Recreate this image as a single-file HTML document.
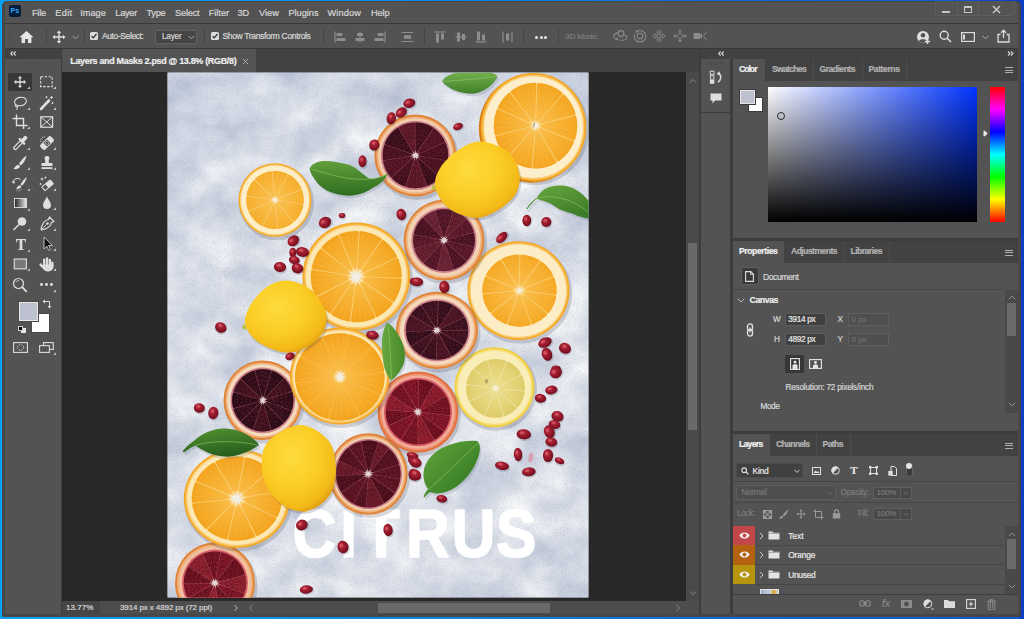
<!DOCTYPE html>
<html><head><meta charset="utf-8"><title>Layers and Masks 2.psd</title>
<style>
html,body{margin:0;padding:0;}
body{width:1024px;height:619px;overflow:hidden;position:relative;background:#0f3fc4;font-family:"Liberation Sans",sans-serif;}
#app div,#app span,#app svg{position:absolute;display:block;box-sizing:border-box;}
#app span{white-space:nowrap;-webkit-text-stroke:0.22px;}
#app{position:absolute;left:0;top:0;width:1024px;height:619px;overflow:hidden;}
</style></head><body><div id="app">
<div style="left:0;top:0;width:1024px;height:619px;background:linear-gradient(to right,#0aa2f7 0%,#0c8ae6 40%,#0f62d2 80%,#1259cc 100%);"></div>
<div style="left:1019px;top:0;width:5px;height:619px;background:#0b3ec2;"></div>
<div style="left:940px;top:0;width:84px;height:3px;background:linear-gradient(to right,rgba(11,62,194,0),#0b3ec2);"></div>
<div style="left:2px;top:1px;width:1019px;height:616px;background:#474747;border-radius:5px 5px 2px 2px;"></div>
<div style="left:5px;top:2px;width:1013px;height:21px;background:#535353;border-radius:3px 3px 0 0;"></div>
<div style="left:8.7px;top:5.2px;width:12.3px;height:11.7px;background:#021e38;border-radius:2.2px;"></div>
<span style="left:10.6px;top:4.20px;line-height:14px;font-size:7px;color:#31a8ff;font-weight:bold;letter-spacing:0.019px;-webkit-text-stroke:0;">Ps</span>
<span style="left:32px;top:6.00px;line-height:14px;font-size:9.2px;color:#d6d6d6;letter-spacing:-0.256px;">File</span>
<span style="left:55.3px;top:6.00px;line-height:14px;font-size:9.2px;color:#d6d6d6;letter-spacing:0.337px;">Edit</span>
<span style="left:80.3px;top:6.00px;line-height:14px;font-size:9.2px;color:#d6d6d6;letter-spacing:-0.013px;">Image</span>
<span style="left:115.3px;top:6.00px;line-height:14px;font-size:9.2px;color:#d6d6d6;letter-spacing:-0.262px;">Layer</span>
<span style="left:146.5px;top:6.00px;line-height:14px;font-size:9.2px;color:#d6d6d6;letter-spacing:-0.236px;">Type</span>
<span style="left:175px;top:6.00px;line-height:14px;font-size:9.2px;color:#d6d6d6;letter-spacing:-0.178px;">Select</span>
<span style="left:208.8px;top:6.00px;line-height:14px;font-size:9.2px;color:#d6d6d6;letter-spacing:-0.040px;">Filter</span>
<span style="left:237.5px;top:6.00px;line-height:14px;font-size:9.2px;color:#d6d6d6;letter-spacing:-0.130px;">3D</span>
<span style="left:259px;top:6.00px;line-height:14px;font-size:9.2px;color:#d6d6d6;letter-spacing:0.056px;">View</span>
<span style="left:288.5px;top:6.00px;line-height:14px;font-size:9.2px;color:#d6d6d6;letter-spacing:-0.025px;">Plugins</span>
<span style="left:327.5px;top:6.00px;line-height:14px;font-size:9.2px;color:#d6d6d6;letter-spacing:0.130px;">Window</span>
<span style="left:371px;top:6.00px;line-height:14px;font-size:9.2px;color:#d6d6d6;letter-spacing:-0.105px;">Help</span>
<div style="left:935.2px;top:1px;width:79.5px;height:15px;border:1px solid #5e5e5e;border-top:none;border-radius:0 0 4px 4px;background:#545454;"></div>
<div style="left:957px;top:2px;width:1px;height:13px;background:#5e5e5e;"></div>
<div style="left:978px;top:2px;width:1px;height:13px;background:#5e5e5e;"></div>
<div style="left:942px;top:11px;width:8px;height:2px;background:#c8c8c8;"></div>
<div style="left:964px;top:6px;width:8px;height:7px;border:1px solid #c8c8c8;border-top-width:2px;"></div>
<svg style="left:992px;top:5px;" width="9" height="9" viewBox="0 0 9 9"><path d="M1 1L8 8M8 1L1 8" stroke="#c8c8c8" stroke-width="1.5" fill="none"/></svg>
<div style="left:5px;top:23px;width:1013px;height:26px;background:#535353;border-top:1px solid #383838;border-bottom:1px solid #383838;"></div>
<div style="left:8.5px;top:29.0px;width:1px;height:1.2px;background:#444;"></div>
<div style="left:8.5px;top:31.5px;width:1px;height:1.2px;background:#444;"></div>
<div style="left:8.5px;top:34.0px;width:1px;height:1.2px;background:#444;"></div>
<div style="left:8.5px;top:36.5px;width:1px;height:1.2px;background:#444;"></div>
<div style="left:8.5px;top:39.0px;width:1px;height:1.2px;background:#444;"></div>
<div style="left:8.5px;top:41.5px;width:1px;height:1.2px;background:#444;"></div>
<svg style="left:19px;top:30px;" width="15" height="14" viewBox="0 0 15 14"><path d="M7.5 1L0.5 7.2H2.6V13H6V9H9V13H12.4V7.2H14.5Z" fill="#e6e6e6"/></svg>
<div style="left:46px;top:27px;width:1px;height:18px;background:#464646;"></div>
<svg style="left:52px;top:30px;" width="14" height="14" viewBox="0 0 14 14"><path d="M7 0.5L9.3 3H7.7V6.3H11V4.7L13.5 7L11 9.3V7.7H7.7V11H9.3L7 13.5L4.7 11H6.3V7.7H3V9.3L0.5 7L3 4.7V6.3H6.3V3H4.7Z" fill="#e0e0e0"/></svg>
<svg style="left:72px;top:35px;" width="7" height="5" viewBox="0 0 7 5"><path d="M0.5 0.8L3.5 3.8L6.5 0.8" stroke="#a8a8a8" stroke-width="1" fill="none"/></svg>
<div style="left:84px;top:27px;width:1px;height:18px;background:#464646;"></div>
<div style="left:90px;top:32px;width:8px;height:8px;background:#dcdcdc;border-radius:1.5px;"></div>
<svg style="left:90px;top:32px;" width="8" height="8" viewBox="0 0 8 8"><path d="M1.6 4.2L3.3 5.9L6.5 2" stroke="#333" stroke-width="1.3" fill="none"/></svg>
<span style="left:102px;top:29.30px;line-height:14px;font-size:8.5px;color:#d6d6d6;letter-spacing:-0.400px;">Auto-Select:</span>
<div style="left:155px;top:30px;width:42px;height:14px;background:#454545;border:1px solid #606060;border-radius:2px;"></div>
<span style="left:162px;top:30.00px;line-height:14px;font-size:8.2px;color:#d6d6d6;letter-spacing:-0.202px;">Layer</span>
<svg style="left:188px;top:35px;" width="7" height="5" viewBox="0 0 7 5"><path d="M0.5 0.8L3.5 3.8L6.5 0.8" stroke="#b0b0b0" stroke-width="1" fill="none"/></svg>
<div style="left:204px;top:27px;width:1px;height:18px;background:#464646;"></div>
<div style="left:211px;top:32px;width:8px;height:8px;background:#dcdcdc;border-radius:1.5px;"></div>
<svg style="left:211px;top:32px;" width="8" height="8" viewBox="0 0 8 8"><path d="M1.6 4.2L3.3 5.9L6.5 2" stroke="#333" stroke-width="1.3" fill="none"/></svg>
<span style="left:222.5px;top:29.30px;line-height:14px;font-size:8.5px;color:#d6d6d6;letter-spacing:-0.343px;">Show Transform Controls</span>
<div style="left:323px;top:27px;width:1px;height:18px;background:#464646;"></div>
<svg style="left:334px;top:31px;" width="12" height="12" viewBox="0 0 12 12"><path d="M1 0.5V11.5" stroke="#8d8d8d" stroke-width="1.2"/><rect x="2.5" y="2" width="6" height="3" fill="#8d8d8d"/><rect x="2.5" y="7" width="9" height="3" fill="#8d8d8d"/></svg>
<svg style="left:354px;top:31px;" width="12" height="12" viewBox="0 0 12 12"><path d="M6 0.5V11.5" stroke="#8d8d8d" stroke-width="1.2"/><rect x="3" y="2" width="6" height="3" fill="#8d8d8d"/><rect x="1.5" y="7" width="9" height="3" fill="#8d8d8d"/></svg>
<svg style="left:374px;top:31px;" width="12" height="12" viewBox="0 0 12 12"><path d="M11 0.5V11.5" stroke="#8d8d8d" stroke-width="1.2"/><rect x="3.5" y="2" width="6" height="3" fill="#8d8d8d"/><rect x="0.5" y="7" width="9" height="3" fill="#8d8d8d"/></svg>
<svg style="left:401px;top:31px;" width="13" height="12" viewBox="0 0 13 12"><path d="M0.5 1.5H12.5M0.5 10.5H12.5" stroke="#8d8d8d" stroke-width="1.2"/><rect x="3" y="4.2" width="7" height="3.6" fill="#8d8d8d"/></svg>
<div style="left:424px;top:27px;width:1px;height:18px;background:#464646;"></div>
<svg style="left:434px;top:31px;" width="12" height="12" viewBox="0 0 12 12"><path d="M0.5 1H11.5" stroke="#8d8d8d" stroke-width="1.2"/><rect x="2" y="2.5" width="3" height="9" fill="#8d8d8d"/><rect x="7" y="2.5" width="3" height="6" fill="#8d8d8d"/></svg>
<svg style="left:455px;top:31px;" width="12" height="12" viewBox="0 0 12 12"><path d="M0.5 6H11.5" stroke="#8d8d8d" stroke-width="1.2"/><rect x="2" y="1.5" width="3" height="9" fill="#8d8d8d"/><rect x="7" y="3" width="3" height="6" fill="#8d8d8d"/></svg>
<svg style="left:475px;top:31px;" width="12" height="12" viewBox="0 0 12 12"><path d="M0.5 11H11.5" stroke="#8d8d8d" stroke-width="1.2"/><rect x="2" y="0.5" width="3" height="9" fill="#8d8d8d"/><rect x="7" y="3.5" width="3" height="6" fill="#8d8d8d"/></svg>
<svg style="left:502px;top:31px;" width="12" height="12" viewBox="0 0 12 12"><path d="M1 0.5V11.5M10 0.5V11.5" stroke="#8d8d8d" stroke-width="1.2"/><rect x="4" y="2.5" width="3.2" height="7" fill="#8d8d8d"/></svg>
<div style="left:523px;top:27px;width:1px;height:18px;background:#464646;"></div>
<div style="left:535.2px;top:35.6px;width:3px;height:3px;border-radius:50%;background:#e6e6e6;"></div>
<div style="left:539.7px;top:35.6px;width:3px;height:3px;border-radius:50%;background:#e6e6e6;"></div>
<div style="left:544.2px;top:35.6px;width:3px;height:3px;border-radius:50%;background:#e6e6e6;"></div>
<div style="left:558px;top:27px;width:1px;height:18px;background:#464646;"></div>
<span style="left:565.5px;top:29.50px;line-height:14px;font-size:8px;color:#7c7c7c;letter-spacing:-0.210px;">3D Mode:</span>
<svg style="left:611.5px;top:28.6px;" width="16" height="14" viewBox="0 0 16 14"><circle cx="9" cy="4.5" r="2.9" fill="none" stroke="#8a8a8a" stroke-width="1.1"/><path d="M5.8 3.6C1.5 4.6 0.6 7.4 3 9.4M8.5 11.2C11.5 11.6 14.5 10.6 14.8 8.6C15 7.4 13.8 6.4 12.4 5.8" fill="none" stroke="#8a8a8a" stroke-width="1.1"/><path d="M2.6 10.6L6.8 11.6L5 8.2Z" fill="#8a8a8a"/></svg>
<svg style="left:632.5px;top:28.6px;" width="14" height="14" viewBox="0 0 14 14"><path d="M4.2 2.2A5.8 5.8 0 1 1 1.6 5.2" fill="none" stroke="#8a8a8a" stroke-width="1.1"/><path d="M2.6 0.8L5.6 2.6L2.8 4.4Z" fill="#8a8a8a"/><circle cx="7" cy="7" r="2.8" fill="none" stroke="#8a8a8a" stroke-width="1.1"/></svg>
<svg style="left:652px;top:28.6px;" width="14" height="14" viewBox="0 0 14 14"><path d="M7 0.8L9.3 3.2H7.9V6.1H10.8V4.7L13.2 7L10.8 9.3V7.9H7.9V10.8H9.3L7 13.2L4.7 10.8H6.1V7.9H3.2V9.3L0.8 7L3.2 4.7V6.1H6.1V3.2H4.7Z" fill="none" stroke="#8a8a8a" stroke-width="0.9"/></svg>
<svg style="left:672px;top:28.6px;" width="16" height="14" viewBox="0 0 16 14"><path d="M8 0.5L9.6 2.8H6.4Z M8 13.5L10 10.8H6Z M1 7L3.6 5.2V8.8Z M15 7L12.4 5.2V8.8Z" fill="#8a8a8a"/><path d="M8 3.8L11.2 7L8 10.2L4.8 7Z" fill="none" stroke="#8a8a8a" stroke-width="1"/><path d="M3.6 7H4.8M11.2 7H12.4M8 2.8V3.8M8 10.2V10.8" stroke="#8a8a8a" stroke-width="1"/></svg>
<svg style="left:692.5px;top:30.6px;" width="16" height="11" viewBox="0 0 16 11"><rect x="0.5" y="2" width="6.6" height="6" fill="#8a8a8a"/><path d="M7.1 3.6L9 2.6V7.4L7.1 6.4Z" fill="#8a8a8a"/><path d="M13.6 0.8L10.4 5L13.6 9.2" fill="none" stroke="#8a8a8a" stroke-width="0.9"/></svg>
<svg style="left:916px;top:30px;" width="15" height="15" viewBox="0 0 15 15"><circle cx="7" cy="7" r="6" fill="#e0e0e0"/><circle cx="7" cy="5.2" r="2.3" fill="#535353"/><path d="M2.8 11.2C3.5 8.6 10.5 8.6 11.2 11.2C9 13.4 5 13.4 2.8 11.2Z" fill="#535353"/><path d="M11.5 9V14M9 11.5H14" stroke="#e0e0e0" stroke-width="1.4"/></svg>
<svg style="left:939px;top:30px;" width="13" height="13" viewBox="0 0 13 13"><circle cx="5.2" cy="5.2" r="4" fill="none" stroke="#dcdcdc" stroke-width="1.4"/><path d="M8.2 8.2L12 12" stroke="#dcdcdc" stroke-width="1.6"/></svg>
<svg style="left:961px;top:32px;" width="14" height="10" viewBox="0 0 14 10"><rect x="0.6" y="0.6" width="12.8" height="8.8" fill="none" stroke="#dcdcdc" stroke-width="1.2"/><rect x="2" y="2.5" width="2" height="5" fill="#dcdcdc"/></svg>
<svg style="left:982px;top:35px;" width="7" height="5" viewBox="0 0 7 5"><path d="M0.5 0.8L3.5 3.8L6.5 0.8" stroke="#b0b0b0" stroke-width="1" fill="none"/></svg>
<svg style="left:997px;top:29px;" width="13" height="14" viewBox="0 0 13 14"><path d="M3.5 5.5H1V13H12V5.5H9.5" fill="none" stroke="#dcdcdc" stroke-width="1.3"/><path d="M6.5 9V1.5M4 3.8L6.5 1.2L9 3.8" fill="none" stroke="#dcdcdc" stroke-width="1.3"/></svg>
<div style="left:5px;top:49px;width:55.5px;height:565px;background:#535353;"></div>
<div style="left:5px;top:49px;width:55.5px;height:9.5px;background:#424242;"></div>
<svg style="left:9.5px;top:51.3px;" width="7" height="5" viewBox="0 0 7 5"><path d="M2.6 0.5L0.7 2.5L2.6 4.5M5.6 0.5L3.7 2.5L5.6 4.5" stroke="#d8d8d8" stroke-width="1.1" fill="none"/></svg>
<div style="left:25.0px;top:61.5px;width:1px;height:3px;background:#484848;"></div>
<div style="left:27.6px;top:61.5px;width:1px;height:3px;background:#484848;"></div>
<div style="left:30.2px;top:61.5px;width:1px;height:3px;background:#484848;"></div>
<div style="left:32.8px;top:61.5px;width:1px;height:3px;background:#484848;"></div>
<div style="left:35.4px;top:61.5px;width:1px;height:3px;background:#484848;"></div>
<div style="left:38.0px;top:61.5px;width:1px;height:3px;background:#484848;"></div>
<div style="left:8px;top:73px;width:24px;height:18px;background:#383838;border-radius:1px;"></div>
<svg style="left:11.0px;top:72.5px;" width="18" height="18" viewBox="0 0 18 18"><g transform="translate(2.5,2.5) scale(0.93)"><path d="M7 0.5L9.3 3H7.7V6.3H11V4.7L13.5 7L11 9.3V7.7H7.7V11H9.3L7 13.5L4.7 11H6.3V7.7H3V9.3L0.5 7L3 4.7V6.3H6.3V3H4.7Z" fill="#dedede"/></g></svg>
<svg style="left:26.8px;top:85.5px" width="3.2" height="3.2" viewBox="0 0 3 3"><path d="M3 0V3H0Z" fill="#c4c4c4"/></svg>
<svg style="left:37.5px;top:72.5px;" width="18" height="18" viewBox="0 0 18 18"><rect x="2.6" y="3.8" width="11.6" height="9.8" fill="none" stroke="#dedede" stroke-width="1.1" stroke-dasharray="2.5 1.5"/></svg>
<svg style="left:53.3px;top:85.5px" width="3.2" height="3.2" viewBox="0 0 3 3"><path d="M3 0V3H0Z" fill="#c4c4c4"/></svg>
<svg style="left:11.0px;top:93.5px;" width="18" height="18" viewBox="0 0 18 18"><ellipse cx="9.5" cy="7.5" rx="6" ry="4.2" transform="rotate(-12 9.5 7.5)" fill="none" stroke="#dedede" stroke-width="1.1"/><path d="M4.6 10.2C3.6 11.2 4.6 12.8 6.2 12.4C6.6 13.5 6.2 14.8 5.6 15.8" fill="none" stroke="#dedede" stroke-width="1.1"/></svg>
<svg style="left:26.8px;top:106.5px" width="3.2" height="3.2" viewBox="0 0 3 3"><path d="M3 0V3H0Z" fill="#c4c4c4"/></svg>
<svg style="left:37.5px;top:93.5px;" width="18" height="18" viewBox="0 0 18 18"><path d="M3 15L11 6.5" stroke="#dedede" stroke-width="2.6" stroke-linecap="round"/><path d="M13.5 2V5M12 3.5H15M8.5 2.2V4.2M7.5 3.2H9.5M14.5 8V10M13.5 9H15.5" stroke="#dedede" stroke-width="0.9"/></svg>
<svg style="left:53.3px;top:106.5px" width="3.2" height="3.2" viewBox="0 0 3 3"><path d="M3 0V3H0Z" fill="#c4c4c4"/></svg>
<svg style="left:11.0px;top:113.0px;" width="18" height="18" viewBox="0 0 18 18"><path d="M5.5 1.5V12.5H16.5M1.5 5.5H12.5V16" fill="none" stroke="#dedede" stroke-width="1.4"/></svg>
<svg style="left:26.8px;top:126.0px" width="3.2" height="3.2" viewBox="0 0 3 3"><path d="M3 0V3H0Z" fill="#c4c4c4"/></svg>
<svg style="left:37.5px;top:113.0px;" width="18" height="18" viewBox="0 0 18 18"><rect x="2.8" y="3.8" width="11.8" height="10.4" fill="none" stroke="#dedede" stroke-width="1.2"/><path d="M2.8 3.8L14.6 14.2M14.6 3.8L2.8 14.2" stroke="#dedede" stroke-width="1"/></svg>
<svg style="left:11.0px;top:133.7px;" width="18" height="18" viewBox="0 0 18 18"><path d="M4.2 14L10.4 7.8" stroke="#dedede" stroke-width="4.2" stroke-linecap="round"/><path d="M4.4 13.8L10.6 7.6" stroke="#535353" stroke-width="1.8" stroke-linecap="round"/><path d="M8.6 5L13.2 9.6" stroke="#dedede" stroke-width="2.2" stroke-linecap="round"/><path d="M11.4 6.8L14.4 3.8" stroke="#dedede" stroke-width="3.8" stroke-linecap="round"/></svg>
<svg style="left:26.8px;top:146.7px" width="3.2" height="3.2" viewBox="0 0 3 3"><path d="M3 0V3H0Z" fill="#c4c4c4"/></svg>
<svg style="left:37.5px;top:133.7px;" width="18" height="18" viewBox="0 0 18 18"><g transform="rotate(-45 9 9)"><rect x="1.5" y="5.5" width="15" height="7" rx="2" fill="#dedede"/><rect x="6.5" y="6.5" width="5" height="5" fill="#535353"/><path d="M7.5 8H8.5M9.5 8H10.5M7.5 10H8.5M9.5 10H10.5" stroke="#dedede" stroke-width="1"/></g><path d="M3 8C2 5 4 2.5 7 3" fill="none" stroke="#dedede" stroke-width="0.9" stroke-dasharray="1.2 1.2"/></svg>
<svg style="left:53.3px;top:146.7px" width="3.2" height="3.2" viewBox="0 0 3 3"><path d="M3 0V3H0Z" fill="#c4c4c4"/></svg>
<svg style="left:11.0px;top:154.0px;" width="18" height="18" viewBox="0 0 18 18"><path d="M15.5 1.5C13 3 9.5 7 8 10L9.8 11.5C12.5 9.5 15 5 15.5 1.5Z" fill="#dedede"/><path d="M7.2 10.8C5 10.8 4.5 13 2.5 15C5.5 15.5 9 14.5 9 12.3Z" fill="#dedede"/></svg>
<svg style="left:26.8px;top:167.0px" width="3.2" height="3.2" viewBox="0 0 3 3"><path d="M3 0V3H0Z" fill="#c4c4c4"/></svg>
<svg style="left:37.5px;top:154.0px;" width="18" height="18" viewBox="0 0 18 18"><path d="M9 2C11 2 12 3.5 11.2 5.2C10.6 6.5 10.6 8 11 9H14.5V12H3.5V9H7C7.4 8 7.4 6.5 6.8 5.2C6 3.5 7 2 9 2Z" fill="#dedede"/><rect x="3.5" y="13.2" width="11" height="1.8" fill="#dedede"/></svg>
<svg style="left:53.3px;top:167.0px" width="3.2" height="3.2" viewBox="0 0 3 3"><path d="M3 0V3H0Z" fill="#c4c4c4"/></svg>
<svg style="left:11.0px;top:174.5px;" width="18" height="18" viewBox="0 0 18 18"><path d="M15.8 2C13.5 3.5 10.8 6.8 9.5 9.5L11 10.8C13.2 9 15.3 5 15.8 2Z" fill="#dedede"/><path d="M8.8 10.2C7 10.2 6.5 12.2 5 13.8C7.5 14.3 10.3 13.4 10.3 11.6Z" fill="#dedede"/><path d="M2 7.5A4.5 4.5 0 0 1 9.5 4.5" fill="none" stroke="#dedede" stroke-width="1"/><path d="M1 6L2.2 8.8L4.6 7Z" fill="#dedede"/><path d="M11 14A4.5 4.5 0 0 1 5 15" fill="none" stroke="#dedede" stroke-width="0.8" stroke-dasharray="1.2 1.2"/></svg>
<svg style="left:26.8px;top:187.5px" width="3.2" height="3.2" viewBox="0 0 3 3"><path d="M3 0V3H0Z" fill="#c4c4c4"/></svg>
<svg style="left:37.5px;top:174.5px;" width="18" height="18" viewBox="0 0 18 18"><g transform="rotate(-40 10 10)"><rect x="3.5" y="7" width="12" height="6" rx="1" fill="#dedede"/><rect x="4.5" y="8" width="4" height="4" fill="#535353"/></g><path d="M4 2.5V5.5M2.5 4H5.5M7.5 1.5V3.5M6.5 2.5H8.5M2.5 8V10M1.5 9H3.5" stroke="#dedede" stroke-width="0.9"/></svg>
<svg style="left:53.3px;top:187.5px" width="3.2" height="3.2" viewBox="0 0 3 3"><path d="M3 0V3H0Z" fill="#c4c4c4"/></svg>
<svg style="left:13.7px;top:198px" width="13" height="10" viewBox="0 0 14 11" preserveAspectRatio="none"><defs><linearGradient id="tg" x1="0" x2="1" y1="0" y2="0"><stop offset="0" stop-color="#222"/><stop offset="1" stop-color="#e8e8e8"/></linearGradient></defs><rect x="0.5" y="0.5" width="13" height="10" fill="url(#tg)" stroke="#dedede" stroke-width="1"/></svg>
<svg style="left:26.8px;top:207.8px" width="3.2" height="3.2" viewBox="0 0 3 3"><path d="M3 0V3H0Z" fill="#bdbdbd"/></svg>
<svg style="left:37.5px;top:194.0px;" width="18" height="18" viewBox="0 0 18 18"><path d="M9 2.5C10.5 6 13 8 13 11A4 4 0 0 1 5 11C5 8 7.5 6 9 2.5Z" fill="#dedede"/></svg>
<svg style="left:53.3px;top:207.0px" width="3.2" height="3.2" viewBox="0 0 3 3"><path d="M3 0V3H0Z" fill="#c4c4c4"/></svg>
<svg style="left:11.0px;top:215.0px;" width="18" height="18" viewBox="0 0 18 18"><circle cx="11" cy="6.5" r="4.3" fill="#dedede"/><path d="M8 9.5L2.5 15" stroke="#dedede" stroke-width="1.6"/></svg>
<svg style="left:26.8px;top:228.0px" width="3.2" height="3.2" viewBox="0 0 3 3"><path d="M3 0V3H0Z" fill="#c4c4c4"/></svg>
<svg style="left:37.5px;top:215.0px;" width="18" height="18" viewBox="0 0 18 18"><path d="M11.5 2L16 6.5L13.5 7.5C13 11 10.5 13.5 4 15L3 14C4.5 7.5 7 5 10.5 4.5Z" fill="none" stroke="#dedede" stroke-width="1.2"/><circle cx="9.5" cy="8.5" r="1.3" fill="#dedede"/><path d="M3.5 14.5L8.5 9.5" stroke="#dedede" stroke-width="0.9"/></svg>
<svg style="left:53.3px;top:228.0px" width="3.2" height="3.2" viewBox="0 0 3 3"><path d="M3 0V3H0Z" fill="#c4c4c4"/></svg>
<span style="left:15.8px;top:234.2px;line-height:22px;font-size:17px;color:#dedede;font-family:'Liberation Serif',serif;font-weight:bold;transform:scaleX(0.88);transform-origin:0 0;">T</span>
<svg style="left:26.8px;top:249.1px" width="3.2" height="3.2" viewBox="0 0 3 3"><path d="M3 0V3H0Z" fill="#bdbdbd"/></svg>
<svg style="left:37.5px;top:235.3px;" width="18" height="18" viewBox="0 0 18 18"><path d="M6 2L6 14L8.8 11.2L10.8 15.5L12.6 14.6L10.6 10.5H14.3Z" fill="#111" stroke="#c8c8c8" stroke-width="0.9"/></svg>
<svg style="left:53.3px;top:248.3px" width="3.2" height="3.2" viewBox="0 0 3 3"><path d="M3 0V3H0Z" fill="#c4c4c4"/></svg>
<svg style="left:11.0px;top:255.0px;" width="18" height="18" viewBox="0 0 18 18"><rect x="3.2" y="4" width="12.2" height="9.8" fill="#787878" stroke="#dedede" stroke-width="1.1"/></svg>
<svg style="left:26.8px;top:268.0px" width="3.2" height="3.2" viewBox="0 0 3 3"><path d="M3 0V3H0Z" fill="#c4c4c4"/></svg>
<svg style="left:37.5px;top:255.0px;" width="18" height="18" viewBox="0 0 18 18"><path d="M6.2 10.5V4.6M9.1 10V3.3M11.9 10.5V4.8M14.3 11.5V7.6" stroke="#dedede" stroke-width="2.3" stroke-linecap="round" fill="none"/><path d="M2.6 9.6L6 13.2" stroke="#dedede" stroke-width="2.4" stroke-linecap="round"/><path d="M5.1 9.5H15.4V11.6C15.4 14.4 13.2 16.4 10.4 16.4H9.6C7.6 16.4 6.2 15.6 5.1 13.4Z" fill="#dedede"/></svg>
<svg style="left:53.3px;top:268.0px" width="3.2" height="3.2" viewBox="0 0 3 3"><path d="M3 0V3H0Z" fill="#c4c4c4"/></svg>
<svg style="left:11.0px;top:275.6px;" width="18" height="18" viewBox="0 0 18 18"><circle cx="7.5" cy="7.5" r="5" fill="none" stroke="#dedede" stroke-width="1.2"/><path d="M11.2 11.2L15.8 15.8" stroke="#dedede" stroke-width="1.8"/><path d="M5 6.5A3 3 0 0 1 8 4.4" stroke="#dedede" stroke-width="0.7" fill="none"/></svg>
<div style="left:40.0px;top:283.4px;width:2.8px;height:2.8px;border-radius:50%;background:#dedede;"></div>
<div style="left:45.2px;top:283.4px;width:2.8px;height:2.8px;border-radius:50%;background:#dedede;"></div>
<div style="left:50.4px;top:283.4px;width:2.8px;height:2.8px;border-radius:50%;background:#dedede;"></div>
<svg style="left:53.3px;top:289.4px" width="3.2" height="3.2" viewBox="0 0 3 3"><path d="M3 0V3H0Z" fill="#bdbdbd"/></svg>
<div style="left:30.5px;top:313px;width:19px;height:19.5px;background:#fff;border:1px solid #4a4a4a;"></div>
<div style="left:18.5px;top:301.5px;width:19.5px;height:19px;background:#bdc1cf;border:1px solid #e8e8e8;box-shadow:0 0 0 1px #4a4a4a;"></div>
<svg style="left:42px;top:299px;" width="10" height="10" viewBox="0 0 10 10"><path d="M2.5 2.5H7.5V7.5" fill="none" stroke="#dedede" stroke-width="1"/><path d="M0.5 2.5L3 0.5V4.5Z M7.5 9.5L5.5 7H9.5Z" fill="#dedede"/></svg>
<div style="left:20.5px;top:328px;width:5px;height:5px;background:#e8e8e8;"></div>
<div style="left:18px;top:325.5px;width:5px;height:5px;background:#111;border:0.5px solid #ccc;"></div>
<svg style="left:13px;top:342px;" width="15" height="11" viewBox="0 0 15 11"><rect x="0.6" y="0.6" width="13.8" height="9.8" fill="none" stroke="#dedede" stroke-width="1.1"/><ellipse cx="7.5" cy="5.5" rx="3.2" ry="2.8" fill="none" stroke="#dedede" stroke-width="0.9" stroke-dasharray="1.3 1.1"/></svg>
<svg style="left:38.5px;top:342px;" width="15" height="11" viewBox="0 0 15 11"><rect x="4.5" y="0.6" width="9.8" height="6.8" fill="none" stroke="#dedede" stroke-width="1.1"/><rect x="0.6" y="3.6" width="9.8" height="6.8" fill="#535353" stroke="#dedede" stroke-width="1.1"/></svg>
<svg style="left:53.3px;top:351.8px" width="3.2" height="3.2" viewBox="0 0 3 3"><path d="M3 0V3H0Z" fill="#bdbdbd"/></svg>
<div style="left:60.5px;top:49px;width:2px;height:565px;background:#3d3d3d;"></div>
<div style="left:62px;top:49px;width:637px;height:23px;background:#424242;"></div>
<div style="left:62px;top:49px;width:194px;height:23px;background:#535353;"></div>
<span style="left:70.3px;top:53.50px;line-height:14px;font-size:9px;color:#ececec;font-weight:bold;letter-spacing:-0.338px;">Layers and Masks 2.psd @ 13.8% (RGB/8)</span>
<svg style="left:241.5px;top:57.5px;" width="7" height="7" viewBox="0 0 7 7"><path d="M0.8 0.8L6.2 6.2M6.2 0.8L0.8 6.2" stroke="#a8a8a8" stroke-width="1" fill="none"/></svg>
<div style="left:62px;top:72px;width:624px;height:529px;background:#282828;"></div>
<div style="left:686.4px;top:72px;width:12.6px;height:529px;background:#4a4a4a;"></div>
<svg style="left:689.2px;top:77.5px;" width="8" height="6" viewBox="0 0 8 6"><path d="M1 4.5L4 1.5L7 4.5" stroke="#8a8a8a" stroke-width="1" fill="none"/></svg>
<svg style="left:689.2px;top:589.5px;" width="8" height="6" viewBox="0 0 8 6"><path d="M1 1.5L4 4.5L7 1.5" stroke="#8a8a8a" stroke-width="1" fill="none"/></svg>
<div style="left:687.8px;top:243.4px;width:9.5px;height:187px;background:#696969;"></div>
<div style="left:62px;top:601px;width:637px;height:13px;background:#4d4d4d;"></div>
<div style="left:62px;top:601px;width:38px;height:13px;background:#454545;"></div>
<span style="left:66px;top:600.70px;line-height:14px;font-size:8px;color:#d6d6d6;letter-spacing:0.061px;">13.77%</span>
<span style="left:120px;top:600.70px;line-height:14px;font-size:8px;color:#d6d6d6;letter-spacing:-0.105px;">3914 px x 4892 px (72 ppi)</span>
<svg style="left:233px;top:604px;" width="6" height="8" viewBox="0 0 6 8"><path d="M1.5 1L4.5 4L1.5 7" stroke="#c0c0c0" stroke-width="1" fill="none"/></svg>
<svg style="left:248px;top:604px;" width="6" height="8" viewBox="0 0 6 8"><path d="M4.5 1L1.5 4L4.5 7" stroke="#8a8a8a" stroke-width="1" fill="none"/></svg>
<svg style="left:675px;top:604px;" width="6" height="8" viewBox="0 0 6 8"><path d="M1.5 1L4.5 4L1.5 7" stroke="#8a8a8a" stroke-width="1" fill="none"/></svg>
<div style="left:377.5px;top:602.5px;width:172.5px;height:10px;background:#696969;"></div>
<div style="left:686.4px;top:601px;width:12.6px;height:13px;background:#4d4d4d;"></div>
<svg style="left:0;top:0;" width="1024" height="619" viewBox="0 0 1024 619"><defs>
<filter id="marble" x="0" y="0" width="100%" height="100%" color-interpolation-filters="sRGB"><feTurbulence type="fractalNoise" baseFrequency="0.022 0.026" numOctaves="5" seed="11" result="n"/><feColorMatrix in="n" type="matrix" values="0.36 0 0 0 0.658  0.32 0 0 0 0.698  0.22 0 0 0 0.788  0 0 0 0 1"/></filter>
<filter id="grain" x="0" y="0" width="100%" height="100%" color-interpolation-filters="sRGB"><feTurbulence type="fractalNoise" baseFrequency="0.55" numOctaves="2" seed="3"/><feColorMatrix type="matrix" values="0 0 0 0 0.45  0 0 0 0 0.47  0 0 0 0 0.58  0 0 1.3 0 -0.68"/></filter>
<radialGradient id="bgL" cx="0.55" cy="0.62" r="0.75"><stop offset="0" stop-color="#ffffff" stop-opacity="0.22"/><stop offset="0.6" stop-color="#ffffff" stop-opacity="0.08"/><stop offset="1" stop-color="#a8b6d2" stop-opacity="0.28"/></radialGradient>
<linearGradient id="bgG" x1="0" y1="0" x2="1" y2="1"><stop offset="0" stop-color="#bcc7da"/><stop offset="0.35" stop-color="#cdd4e1"/><stop offset="0.7" stop-color="#d6dbe6"/><stop offset="1" stop-color="#ccd2e0"/></linearGradient>
<radialGradient id="lemG" cx="0.4" cy="0.36" r="0.68"><stop offset="0" stop-color="#fddb3e"/><stop offset="0.55" stop-color="#fbcd24"/><stop offset="0.88" stop-color="#f3b918"/><stop offset="1" stop-color="#e2a010"/></radialGradient>
<radialGradient id="orF" gradientUnits="userSpaceOnUse" cx="0" cy="0" r="44"><stop offset="0" stop-color="#fac256"/><stop offset="0.5" stop-color="#f7b233"/><stop offset="1" stop-color="#f4a520"/></radialGradient>
<radialGradient id="blF"><stop offset="0" stop-color="#6e1c2c"/><stop offset="0.6" stop-color="#4e1322"/><stop offset="1" stop-color="#3a0e1b"/></radialGradient>
<radialGradient id="blR"><stop offset="0" stop-color="#9a1c2e"/><stop offset="0.6" stop-color="#7c1424"/><stop offset="1" stop-color="#5e0f1c"/></radialGradient>
<radialGradient id="lsF" gradientUnits="userSpaceOnUse" cx="0" cy="0" r="32"><stop offset="0" stop-color="#ebde90"/><stop offset="0.7" stop-color="#e3d274"/><stop offset="1" stop-color="#dcc964"/></radialGradient>
<radialGradient id="seedG" cx="0.4" cy="0.35" r="0.7"><stop offset="0" stop-color="#b83040"/><stop offset="0.55" stop-color="#94182a"/><stop offset="1" stop-color="#640d1a"/></radialGradient>
<linearGradient id="leafG" x1="0" y1="0" x2="0" y2="1"><stop offset="0" stop-color="#5d9a35"/><stop offset="1" stop-color="#2f6b1f"/></linearGradient>
<clipPath id="imgclip"><rect x="167.5" y="72.5" width="421" height="525"/></clipPath>
</defs><g clip-path="url(#imgclip)"><rect x="167.5" y="72.5" width="421" height="525" fill="#cbd3e1"/><rect x="167.5" y="72.5" width="421" height="525" filter="url(#marble)"/><rect x="167.5" y="72.5" width="421" height="525" fill="url(#bgL)"/><rect x="167.5" y="72.5" width="421" height="525" filter="url(#grain)" opacity="0.35"/><text transform="translate(0 557.2) scale(0.890 1)" x="328.54 382.25 407.64 456.29 507.53 557.19" y="0" font-family="Liberation Sans, sans-serif" font-weight="bold" font-size="68" fill="#ffffff" stroke="#ffffff" stroke-width="1.5" stroke-linejoin="round">CITRUS</text><ellipse cx="535.0" cy="129.7" rx="53.8" ry="55.3" fill="#3c3c50" opacity="0.2"/><ellipse cx="531.7" cy="128.4" rx="52.8" ry="54.3" fill="#d37a14"/><g transform="translate(533.5 127.2) rotate(0) scale(1 1.0284)"><circle r="52.8" fill="#f5a826"/><circle r="50.95" fill="#f9cb70"/><circle r="49.37" fill="#fdefcc"/><g transform="translate(2 -1.5)"><circle r="41.71" fill="#fad078"/><path d="M4.9 4.0L36.7 16.3A40.1 40.1 0 0 1 22.9 33.0Z" fill="url(#orF)" stroke="url(#orF)" stroke-width="3.1679999999999997" stroke-linejoin="round"/><path d="M1.5 6.2L19.4 35.1A40.1 40.1 0 0 1 -1.2 40.1Z" fill="url(#orF)" stroke="url(#orF)" stroke-width="3.1679999999999997" stroke-linejoin="round"/><path d="M-2.5 5.8L-5.2 39.8A40.1 40.1 0 0 1 -25.3 31.2Z" fill="url(#orF)" stroke="url(#orF)" stroke-width="3.1679999999999997" stroke-linejoin="round"/><path d="M-5.8 3.5L-28.2 28.5A40.1 40.1 0 0 1 -38.4 11.6Z" fill="url(#orF)" stroke="url(#orF)" stroke-width="3.1679999999999997" stroke-linejoin="round"/><path d="M-6.2 -0.5L-39.4 7.7A40.1 40.1 0 0 1 -37.5 -14.3Z" fill="url(#orF)" stroke="url(#orF)" stroke-width="3.1679999999999997" stroke-linejoin="round"/><path d="M-6.5 -5.0L-35.9 -17.9A40.1 40.1 0 0 1 -26.3 -30.3Z" fill="url(#orF)" stroke="url(#orF)" stroke-width="3.1679999999999997" stroke-linejoin="round"/><path d="M-1.8 -5.6L-23.1 -32.8A40.1 40.1 0 0 1 -0.8 -40.1Z" fill="url(#orF)" stroke="url(#orF)" stroke-width="3.1679999999999997" stroke-linejoin="round"/><path d="M2.2 -5.4L3.2 -40.0A40.1 40.1 0 0 1 25.3 -31.2Z" fill="url(#orF)" stroke="url(#orF)" stroke-width="3.1679999999999997" stroke-linejoin="round"/><path d="M6.0 -3.6L28.3 -28.5A40.1 40.1 0 0 1 38.3 -12.1Z" fill="url(#orF)" stroke="url(#orF)" stroke-width="3.1679999999999997" stroke-linejoin="round"/><path d="M6.5 0.4L39.3 -8.2A40.1 40.1 0 0 1 38.1 12.6Z" fill="url(#orF)" stroke="url(#orF)" stroke-width="3.1679999999999997" stroke-linejoin="round"/><path d="M14.5 6.5L35.4 15.8M13.3 8.6L32.5 21.2M11.8 10.6L28.8 26.0M10.0 12.3L24.4 30.2M7.9 13.7L19.4 33.6M5.7 14.8L13.9 36.2M3.3 15.5L8.0 38.0M0.8 15.8L2.0 38.7M-1.7 15.8L-4.1 38.6M-4.1 15.3L-10.1 37.5M-6.5 14.5L-15.8 35.4M-8.6 13.3L-21.2 32.5M-10.6 11.8L-26.0 28.8M-12.3 10.0L-30.2 24.4M-13.7 7.9L-33.6 19.4M-14.8 5.7L-36.2 13.9M-15.5 3.3L-38.0 8.0M-15.8 0.8L-38.7 2.0M-15.8 -1.7L-38.6 -4.1M-15.3 -4.1L-37.5 -10.1M-14.5 -6.5L-35.4 -15.8M-13.3 -8.6L-32.5 -21.2M-11.8 -10.6L-28.8 -26.0M-10.0 -12.3L-24.4 -30.2M-7.9 -13.7L-19.4 -33.6M-5.7 -14.8L-13.9 -36.2M-3.3 -15.5L-8.0 -38.0M-0.8 -15.8L-2.0 -38.7M1.7 -15.8L4.1 -38.6M4.1 -15.3L10.1 -37.5M6.5 -14.5L15.8 -35.4M8.6 -13.3L21.2 -32.5M10.6 -11.8L26.0 -28.8M12.3 -10.0L30.2 -24.4M13.7 -7.9L33.6 -19.4M14.8 -5.7L36.2 -13.9M15.5 -3.3L38.0 -8.0M15.8 -0.8L38.7 -2.0M15.8 1.7L38.6 4.1M15.3 4.1L37.5 10.1" stroke="#f8c458" stroke-width="0.8" fill="none" opacity="0.4"/><circle r="4.75" fill="#fbd98e" opacity="0.6"/><polygon points="5.6,2.0 1.5,1.2 2.9,4.3 0.6,2.0 -0.2,5.3 -0.8,2.1 -2.8,3.6 -1.7,1.1 -4.7,1.4 -2.5,-0.1 -5.4,-2.0 -1.6,-1.2 -3.2,-4.8 -0.5,-1.9 0.2,-5.5 0.7,-1.8 2.8,-3.5 2.0,-1.4 4.6,-1.3 2.0,0.1" fill="#f3eee2"/><ellipse cx="-1.6" cy="0" rx="0.8" ry="2.6" fill="#8a6a3a" opacity="0.5" transform="rotate(20)"/></g></g><ellipse cx="416.9" cy="157.9" rx="42" ry="42" fill="#3c3c50" opacity="0.2"/><g transform="translate(415.4 155.4) rotate(0) scale(1 1.0000)"><circle r="41" fill="#e08538"/><circle r="38.95" fill="#efb07c"/><circle r="37.11" fill="#f3cfae"/><circle r="34.65" fill="#c98088"/><circle r="32.80" fill="#8a4050"/><path d="M3.3 1.6L31.5 6.3A32.1 32.1 0 0 1 24.7 20.5Z" fill="#4a1220" stroke="#4a1220" stroke-width="1.4" stroke-linejoin="round"/><path d="M2.3 3.4L23.4 22.0A32.1 32.1 0 0 1 12.2 29.7Z" fill="#3c0f1c" stroke="#3c0f1c" stroke-width="1.4" stroke-linejoin="round"/><path d="M0.1 3.3L10.3 30.4A32.1 32.1 0 0 1 -8.7 30.9Z" fill="#5c1828" stroke="#5c1828" stroke-width="1.4" stroke-linejoin="round"/><path d="M-2.1 3.3L-10.6 30.3A32.1 32.1 0 0 1 -22.8 22.6Z" fill="#44111e" stroke="#44111e" stroke-width="1.4" stroke-linejoin="round"/><path d="M-3.1 1.5L-24.1 21.2A32.1 32.1 0 0 1 -31.5 6.1Z" fill="#531526" stroke="#531526" stroke-width="1.4" stroke-linejoin="round"/><path d="M-4.0 -0.4L-31.8 4.2A32.1 32.1 0 0 1 -30.5 -9.9Z" fill="#4a1220" stroke="#4a1220" stroke-width="1.4" stroke-linejoin="round"/><path d="M-2.5 -2.1L-29.9 -11.8A32.1 32.1 0 0 1 -17.7 -26.8Z" fill="#3c0f1c" stroke="#3c0f1c" stroke-width="1.4" stroke-linejoin="round"/><path d="M-1.1 -3.6L-16.0 -27.8A32.1 32.1 0 0 1 -1.5 -32.1Z" fill="#5c1828" stroke="#5c1828" stroke-width="1.4" stroke-linejoin="round"/><path d="M0.9 -3.2L0.5 -32.1A32.1 32.1 0 0 1 17.1 -27.2Z" fill="#44111e" stroke="#44111e" stroke-width="1.4" stroke-linejoin="round"/><path d="M2.8 -2.3L18.7 -26.1A32.1 32.1 0 0 1 28.9 -13.9Z" fill="#531526" stroke="#531526" stroke-width="1.4" stroke-linejoin="round"/><path d="M3.5 -0.4L29.7 -12.1A32.1 32.1 0 0 1 31.8 4.3Z" fill="#4a1220" stroke="#4a1220" stroke-width="1.4" stroke-linejoin="round"/><path d="M11.1 1.5L25.5 3.4M8.5 2.1L25.8 6.3M7.7 3.0L27.1 10.6M9.5 4.9L26.6 13.7M8.9 6.1L23.0 15.6M6.5 5.7L23.3 20.4M9.9 10.4L20.9 21.8M8.9 11.7L16.3 21.5M4.1 7.2L12.2 21.7M6.5 14.7L10.4 23.7M4.3 15.2L8.5 29.6M2.0 10.9L5.0 27.6M0.4 9.1L1.4 29.5M-1.0 15.2L-1.6 24.8M-1.7 8.8L-5.0 26.4M-4.5 15.1L-7.6 25.7M-5.1 11.6L-10.7 24.4M-4.7 8.5L-12.1 22.0M-8.0 11.3L-17.9 25.5M-5.7 6.4L-20.6 23.2M-8.7 7.6L-19.7 17.2M-12.4 8.4L-22.8 15.6M-7.6 4.1L-27.0 14.4M-11.3 4.7L-27.8 11.5M-13.7 3.9L-29.7 8.4M-14.5 2.1L-25.1 3.5M-9.4 0.3L-30.1 1.0M-11.9 -0.9L-31.1 -2.3M-15.8 -3.4L-27.0 -5.8M-13.5 -4.3L-26.4 -8.5M-10.5 -4.7L-23.4 -10.4M-14.0 -8.3L-26.6 -15.8M-9.7 -7.5L-21.2 -16.4M-7.6 -7.1L-21.7 -20.3M-7.0 -8.7L-18.6 -23.3M-7.4 -11.8L-15.5 -24.5M-4.9 -10.1L-12.7 -26.3M-4.2 -11.4L-10.3 -27.8M-2.4 -10.3L-6.8 -30.0M-1.4 -12.9L-2.7 -24.5M-0.0 -10.3L-0.0 -29.0M1.6 -14.8L3.2 -28.7M2.6 -10.7L6.8 -28.0M5.1 -14.1L9.2 -25.3M6.9 -13.7L13.1 -26.0M8.9 -13.4L15.5 -23.3M6.0 -7.4L19.0 -23.3M8.8 -8.3L21.2 -20.0M11.3 -8.6L20.5 -15.6M11.2 -6.6L24.9 -14.7M12.1 -5.6L26.9 -12.5M13.4 -4.3L23.6 -7.6M11.5 -2.5L28.2 -6.2M13.8 -1.4L28.6 -2.9M12.1 0.1L26.1 0.2" stroke="#8a3444" stroke-width="0.9" fill="none" opacity="0.45" stroke-dasharray="2.5 1.8"/><path d="M10.8 2.0L24.8 4.6M10.9 3.4L22.2 6.9M11.8 5.4L24.9 11.3M10.1 6.1L25.2 15.3M10.6 7.8L20.1 14.9M7.8 7.5L20.8 20.1M6.5 7.8L17.4 21.1M7.9 11.9L14.1 21.2M7.8 15.9L12.7 25.9M5.6 15.5L9.4 26.0M2.5 10.7L6.3 26.5M2.0 17.6L3.3 29.8M-0.1 12.7L-0.1 29.4M-1.0 10.7L-2.5 26.9M-2.5 10.7L-6.4 26.8M-4.5 12.1L-9.1 24.4M-5.3 11.0L-12.9 27.0M-9.5 15.0L-15.9 24.9M-7.6 9.2L-19.1 23.2M-9.5 9.2L-18.1 17.6M-11.1 8.3L-20.1 14.9M-9.3 5.6L-23.5 14.2M-11.1 5.1L-26.0 11.9M-9.5 2.9L-25.6 7.9M-17.1 3.6L-28.0 5.9M-12.0 1.2L-24.0 2.3M-12.2 -0.6L-27.3 -1.3M-15.0 -2.1L-27.0 -3.9M-10.4 -2.9L-27.4 -7.5M-13.3 -5.1L-23.7 -9.0M-12.6 -6.5L-23.4 -12.1M-13.2 -8.9L-22.6 -15.2M-9.1 -7.6L-20.2 -16.8M-11.4 -12.8L-17.9 -20.1M-9.8 -12.9L-15.7 -20.8M-7.7 -13.6L-13.5 -24.0M-6.8 -15.9L-10.0 -23.7M-4.8 -16.1L-7.0 -23.4M-3.0 -16.4L-4.2 -23.1M-0.7 -15.5L-1.1 -26.1M0.8 -16.2L1.4 -29.5M2.2 -13.6L4.2 -26.6M3.5 -12.0L6.8 -23.1M6.5 -15.2L9.2 -21.6M8.0 -14.5L13.8 -25.1M6.0 -8.1L16.7 -22.7M12.4 -13.0L19.3 -20.3M12.5 -11.2L18.3 -16.4M14.6 -9.9L23.3 -15.7M10.7 -5.9L26.0 -14.2M13.8 -5.6L24.0 -9.7M14.4 -4.0L22.4 -6.2M12.8 -2.0L23.2 -3.7M14.5 -0.7L28.3 -1.3M10.9 1.1L25.9 2.6" stroke="#1e060c" stroke-width="0.9" fill="none" opacity="0.35" stroke-dasharray="3 2.2"/><polygon points="4.7,0.5 2.0,0.8 4.0,3.2 1.4,2.0 1.6,4.6 0.1,1.7 -1.3,5.4 -0.9,1.5 -3.9,3.7 -1.8,0.9 -5.9,1.1 -2.1,-0.2 -5.0,-2.0 -1.5,-1.2 -3.0,-4.3 -0.6,-1.7 -0.2,-5.6 0.5,-2.0 2.2,-3.8 1.3,-1.3 4.3,-2.2 2.2,-0.4" fill="#e4d8d4"/></g><linearGradient id="lg33" x1="0.50" y1="0.00" x2="0.50" y2="1.00"><stop offset="0" stop-color="#72b04c"/><stop offset="1" stop-color="#3f7f2a"/></linearGradient><path d="M442 81.5C445 76 452 73 462 72.5H490C494 73.5 497 75 497.5 76.5C494 84 486 91 474.5 93.6C462 94.5 448 89 442 81.5Z" fill="#6a7288" opacity="0.22" transform="translate(1.5 2.5)"/><path d="M442 81.5C445 76 452 73 462 72.5H490C494 73.5 497 75 497.5 76.5C494 84 486 91 474.5 93.6C462 94.5 448 89 442 81.5Z" fill="url(#lg33)"/><path d="M443 81.5C460 80 480 79 496.5 76.5" fill="none" stroke="#9ccc6c" stroke-width="0.8" opacity="0.7"/><linearGradient id="lg37" x1="0.50" y1="0.00" x2="0.50" y2="1.00"><stop offset="0" stop-color="#62a03c"/><stop offset="1" stop-color="#2c6c1e"/></linearGradient><path d="M309.5 168.7C312 163 319 160.5 327.3 161C335 161.5 342 163 348.3 164.5C356 167 362 174 369.3 178.5C376 180 382 176 388.2 173.6C385 180 380 184.5 373.5 187.6C367 192 360 195 352.5 195.6C343 196 334 194 327.3 190.8C321 187 317 183.5 314.7 179.2C312 175.5 310 172 309.5 168.7Z" fill="#6a7288" opacity="0.22" transform="translate(1.5 2.5)"/><path d="M309.5 168.7C312 163 319 160.5 327.3 161C335 161.5 342 163 348.3 164.5C356 167 362 174 369.3 178.5C376 180 382 176 388.2 173.6C385 180 380 184.5 373.5 187.6C367 192 360 195 352.5 195.6C343 196 334 194 327.3 190.8C321 187 317 183.5 314.7 179.2C312 175.5 310 172 309.5 168.7Z" fill="url(#lg37)"/><path d="M311 169C330 174 360 186 387 174.5" fill="none" stroke="#9ccc6c" stroke-width="0.8" opacity="0.7"/><linearGradient id="lg41" x1="0.25" y1="0.07" x2="0.75" y2="0.93"><stop offset="0" stop-color="#64a23c"/><stop offset="1" stop-color="#3c7c28"/></linearGradient><path d="M526.3 208.9C529 204 533 200.5 536.8 197.8C539 194 541 191.5 544 189.4C549 186.5 555 185 561 185.5C566 185.5 571 187 575.6 189.4C581 192.5 585.5 196.5 589 201.5V218.8C584 218 578.5 216.5 573.5 214C568 212 563 210.5 558.8 208.9C555.5 207 553 205 550.4 203.6C547.5 202 544.5 201 542 200.5C540 200 538 199.3 536.8 198.8C533 202 529.5 206 527 209.6Z" fill="#6a7288" opacity="0.22" transform="translate(1.5 2.5)"/><path d="M526.3 208.9C529 204 533 200.5 536.8 197.8C539 194 541 191.5 544 189.4C549 186.5 555 185 561 185.5C566 185.5 571 187 575.6 189.4C581 192.5 585.5 196.5 589 201.5V218.8C584 218 578.5 216.5 573.5 214C568 212 563 210.5 558.8 208.9C555.5 207 553 205 550.4 203.6C547.5 202 544.5 201 542 200.5C540 200 538 199.3 536.8 198.8C533 202 529.5 206 527 209.6Z" fill="url(#lg41)"/><path d="M537 198.5C550 194 572 198 588 212" fill="none" stroke="#9ccc6c" stroke-width="0.8" opacity="0.7"/><ellipse cx="276.5" cy="202.5" rx="37.5" ry="37.8" fill="#3c3c50" opacity="0.2"/><g transform="translate(275 200) rotate(0) scale(1 1.0082)"><circle r="36.5" fill="#f5a826"/><circle r="35.22" fill="#f9cb70"/><circle r="34.13" fill="#fdeec8"/><g transform="translate(0 0)"><circle r="28.84" fill="#fad078"/><path d="M3.6 2.0L27.2 5.6A27.7 27.7 0 0 1 19.2 20.1Z" fill="url(#orF)" stroke="url(#orF)" stroke-width="2.19" stroke-linejoin="round"/><path d="M1.8 4.4L17.0 21.9A27.7 27.7 0 0 1 4.0 27.5Z" fill="url(#orF)" stroke="url(#orF)" stroke-width="2.19" stroke-linejoin="round"/><path d="M-1.0 5.3L1.1 27.7A27.7 27.7 0 0 1 -10.8 25.6Z" fill="url(#orF)" stroke="url(#orF)" stroke-width="2.19" stroke-linejoin="round"/><path d="M-3.0 2.8L-13.4 24.3A27.7 27.7 0 0 1 -24.9 12.2Z" fill="url(#orF)" stroke="url(#orF)" stroke-width="2.19" stroke-linejoin="round"/><path d="M-5.4 0.7L-26.0 9.5A27.7 27.7 0 0 1 -27.6 -2.4Z" fill="url(#orF)" stroke="url(#orF)" stroke-width="2.19" stroke-linejoin="round"/><path d="M-4.2 -2.0L-27.2 -5.3A27.7 27.7 0 0 1 -20.9 -18.3Z" fill="url(#orF)" stroke="url(#orF)" stroke-width="2.19" stroke-linejoin="round"/><path d="M-1.8 -3.8L-18.8 -20.4A27.7 27.7 0 0 1 -4.2 -27.4Z" fill="url(#orF)" stroke="url(#orF)" stroke-width="2.19" stroke-linejoin="round"/><path d="M0.9 -5.0L-1.3 -27.7A27.7 27.7 0 0 1 11.4 -25.3Z" fill="url(#orF)" stroke="url(#orF)" stroke-width="2.19" stroke-linejoin="round"/><path d="M3.0 -2.7L13.9 -24.0A27.7 27.7 0 0 1 25.3 -11.4Z" fill="url(#orF)" stroke="url(#orF)" stroke-width="2.19" stroke-linejoin="round"/><path d="M5.6 -0.6L26.3 -8.7A27.7 27.7 0 0 1 27.6 2.8Z" fill="url(#orF)" stroke="url(#orF)" stroke-width="2.19" stroke-linejoin="round"/><path d="M10.6 2.9L25.8 7.2M10.0 4.5L24.4 11.1M9.1 6.0L22.4 14.8M8.1 7.4L19.8 18.1M6.8 8.6L16.7 21.0M5.4 9.5L13.2 23.3M3.8 10.3L9.4 25.1M2.2 10.7L5.4 26.3M0.5 10.9L1.2 26.8M-1.2 10.9L-3.0 26.6M-2.9 10.6L-7.2 25.8M-4.5 10.0L-11.1 24.4M-6.0 9.1L-14.8 22.4M-7.4 8.1L-18.1 19.8M-8.6 6.8L-21.0 16.7M-9.5 5.4L-23.3 13.2M-10.3 3.8L-25.1 9.4M-10.7 2.2L-26.3 5.4M-10.9 0.5L-26.8 1.2M-10.9 -1.2L-26.6 -3.0M-10.6 -2.9L-25.8 -7.2M-10.0 -4.5L-24.4 -11.1M-9.1 -6.0L-22.4 -14.8M-8.1 -7.4L-19.8 -18.1M-6.8 -8.6L-16.7 -21.0M-5.4 -9.5L-13.2 -23.3M-3.8 -10.3L-9.4 -25.1M-2.2 -10.7L-5.4 -26.3M-0.5 -10.9L-1.2 -26.8M1.2 -10.9L3.0 -26.6M2.9 -10.6L7.2 -25.8M4.5 -10.0L11.1 -24.4M6.0 -9.1L14.8 -22.4M7.4 -8.1L18.1 -19.8M8.6 -6.8L21.0 -16.7M9.5 -5.4L23.3 -13.2M10.3 -3.8L25.1 -9.4M10.7 -2.2L26.3 -5.4M10.9 -0.5L26.8 -1.2M10.9 1.2L26.6 3.0" stroke="#f8c458" stroke-width="0.8" fill="none" opacity="0.4"/><circle r="3.29" fill="#fbd98e" opacity="0.6"/><polygon points="3.6,0.7 1.3,0.7 2.7,2.9 0.5,1.2 0.4,3.9 -0.3,1.3 -1.6,2.8 -1.3,1.2 -3.5,1.6 -1.4,0.2 -3.2,-0.6 -1.5,-0.9 -2.6,-2.8 -0.7,-1.5 -0.4,-3.2 0.3,-1.6 1.7,-3.0 1.0,-1.0 3.2,-1.4 1.6,-0.2" fill="#f3eee2"/></g></g><ellipse cx="520.0" cy="293.1" rx="52" ry="50.4" fill="#3c3c50" opacity="0.2"/><g transform="translate(518.5 290.6) rotate(0) scale(1 0.9686)"><circle r="51" fill="#f5a826"/><circle r="49.21" fill="#f9cb70"/><circle r="47.69" fill="#fdedc6"/><g transform="translate(1 0)"><circle r="37.23" fill="#fad078"/><path d="M6.2 2.8L35.1 6.5A35.7 35.7 0 0 1 28.4 21.6Z" fill="url(#orF)" stroke="url(#orF)" stroke-width="3.06" stroke-linejoin="round"/><path d="M4.1 6.0L25.9 24.6A35.7 35.7 0 0 1 13.3 33.1Z" fill="url(#orF)" stroke="url(#orF)" stroke-width="3.06" stroke-linejoin="round"/><path d="M-0.0 5.9L9.7 34.4A35.7 35.7 0 0 1 -10.0 34.3Z" fill="url(#orF)" stroke="url(#orF)" stroke-width="3.06" stroke-linejoin="round"/><path d="M-4.1 5.9L-13.7 33.0A35.7 35.7 0 0 1 -26.3 24.1Z" fill="url(#orF)" stroke="url(#orF)" stroke-width="3.06" stroke-linejoin="round"/><path d="M-6.1 2.5L-28.8 21.1A35.7 35.7 0 0 1 -35.3 5.3Z" fill="url(#orF)" stroke="url(#orF)" stroke-width="3.06" stroke-linejoin="round"/><path d="M-7.4 -1.2L-35.7 1.4A35.7 35.7 0 0 1 -33.3 -13.0Z" fill="url(#orF)" stroke="url(#orF)" stroke-width="3.06" stroke-linejoin="round"/><path d="M-4.6 -4.2L-31.7 -16.5A35.7 35.7 0 0 1 -19.3 -30.1Z" fill="url(#orF)" stroke="url(#orF)" stroke-width="3.06" stroke-linejoin="round"/><path d="M-1.9 -7.2L-15.9 -32.0A35.7 35.7 0 0 1 -1.6 -35.7Z" fill="url(#orF)" stroke="url(#orF)" stroke-width="3.06" stroke-linejoin="round"/><path d="M2.0 -6.5L2.3 -35.6A35.7 35.7 0 0 1 18.3 -30.7Z" fill="url(#orF)" stroke="url(#orF)" stroke-width="3.06" stroke-linejoin="round"/><path d="M5.3 -4.4L21.5 -28.5A35.7 35.7 0 0 1 31.9 -16.0Z" fill="url(#orF)" stroke="url(#orF)" stroke-width="3.06" stroke-linejoin="round"/><path d="M7.2 -1.0L33.5 -12.5A35.7 35.7 0 0 1 35.6 2.7Z" fill="url(#orF)" stroke="url(#orF)" stroke-width="3.06" stroke-linejoin="round"/><path d="M14.9 3.3L33.8 7.6M14.3 5.4L32.4 12.3M13.4 7.4L30.3 16.8M12.2 9.2L27.6 20.9M10.8 10.9L24.3 24.6M9.1 12.3L20.6 27.8M7.3 13.5L16.4 30.5M5.3 14.4L11.9 32.5M3.2 15.0L7.2 33.9M1.0 15.3L2.3 34.5M-1.2 15.3L-2.7 34.5M-3.3 14.9L-7.6 33.8M-5.4 14.3L-12.3 32.4M-7.4 13.4L-16.8 30.3M-9.2 12.2L-20.9 27.6M-10.9 10.8L-24.6 24.3M-12.3 9.1L-27.8 20.6M-13.5 7.3L-30.5 16.4M-14.4 5.3L-32.5 11.9M-15.0 3.2L-33.9 7.2M-15.3 1.0L-34.5 2.3M-15.3 -1.2L-34.5 -2.7M-14.9 -3.3L-33.8 -7.6M-14.3 -5.4L-32.4 -12.3M-13.4 -7.4L-30.3 -16.8M-12.2 -9.2L-27.6 -20.9M-10.8 -10.9L-24.3 -24.6M-9.1 -12.3L-20.6 -27.8M-7.3 -13.5L-16.4 -30.5M-5.3 -14.4L-11.9 -32.5M-3.2 -15.0L-7.2 -33.9M-1.0 -15.3L-2.3 -34.5M1.2 -15.3L2.7 -34.5M3.3 -14.9L7.6 -33.8M5.4 -14.3L12.3 -32.4M7.4 -13.4L16.8 -30.3M9.2 -12.2L20.9 -27.6M10.9 -10.8L24.6 -24.3M12.3 -9.1L27.8 -20.6M13.5 -7.3L30.5 -16.4M14.4 -5.3L32.5 -11.9M15.0 -3.2L33.9 -7.2M15.3 -1.0L34.5 -2.3M15.3 1.2L34.5 2.7" stroke="#f8c458" stroke-width="0.8" fill="none" opacity="0.4"/><circle r="4.13" fill="#fbd98e" opacity="0.6"/><polygon points="4.9,0.7 1.7,0.8 3.0,2.7 0.9,1.4 1.1,4.0 -0.0,1.7 -1.5,4.9 -1.0,1.6 -3.8,3.2 -1.5,0.7 -4.5,0.6 -2.1,-0.3 -4.3,-2.0 -1.4,-1.2 -2.4,-3.8 -0.5,-1.6 0.0,-4.1 0.5,-1.7 2.4,-3.7 1.4,-1.2 4.7,-2.1 1.7,-0.2" fill="#f3eee2"/></g></g><ellipse cx="445.5" cy="242.7" rx="41.4" ry="41.4" fill="#3c3c50" opacity="0.2"/><g transform="translate(444 240.2) rotate(0) scale(1 1.0000)"><circle r="40.4" fill="#e08538"/><circle r="38.38" fill="#efb07c"/><circle r="36.56" fill="#f2d2b4"/><circle r="32.72" fill="#c98088"/><circle r="30.91" fill="#8a4050"/><path d="M3.4 1.8L29.3 7.5A30.2 30.2 0 0 1 22.9 19.7Z" fill="#5a1a2c" stroke="#5a1a2c" stroke-width="1.4" stroke-linejoin="round"/><path d="M2.1 3.3L21.5 21.2A30.2 30.2 0 0 1 10.3 28.4Z" fill="#4a1424" stroke="#4a1424" stroke-width="1.4" stroke-linejoin="round"/><path d="M0.2 3.7L8.4 29.0A30.2 30.2 0 0 1 -5.7 29.7Z" fill="#6a2436" stroke="#6a2436" stroke-width="1.4" stroke-linejoin="round"/><path d="M-1.8 3.5L-7.7 29.2A30.2 30.2 0 0 1 -19.6 23.0Z" fill="#541828" stroke="#541828" stroke-width="1.4" stroke-linejoin="round"/><path d="M-3.1 1.9L-21.1 21.6A30.2 30.2 0 0 1 -28.8 9.2Z" fill="#64202f" stroke="#64202f" stroke-width="1.4" stroke-linejoin="round"/><path d="M-4.3 0.2L-29.3 7.3A30.2 30.2 0 0 1 -29.8 -4.8Z" fill="#5a1a2c" stroke="#5a1a2c" stroke-width="1.4" stroke-linejoin="round"/><path d="M-2.8 -1.6L-29.4 -6.7A30.2 30.2 0 0 1 -21.2 -21.5Z" fill="#4a1424" stroke="#4a1424" stroke-width="1.4" stroke-linejoin="round"/><path d="M-2.2 -3.9L-19.7 -22.9A30.2 30.2 0 0 1 -9.6 -28.6Z" fill="#6a2436" stroke="#6a2436" stroke-width="1.4" stroke-linejoin="round"/><path d="M0.0 -3.4L-7.7 -29.2A30.2 30.2 0 0 1 8.1 -29.1Z" fill="#541828" stroke="#541828" stroke-width="1.4" stroke-linejoin="round"/><path d="M2.1 -3.5L10.0 -28.5A30.2 30.2 0 0 1 20.9 -21.8Z" fill="#64202f" stroke="#64202f" stroke-width="1.4" stroke-linejoin="round"/><path d="M3.4 -1.9L22.3 -20.4A30.2 30.2 0 0 1 29.0 -8.5Z" fill="#5a1a2c" stroke="#5a1a2c" stroke-width="1.4" stroke-linejoin="round"/><path d="M4.3 -0.1L29.5 -6.6A30.2 30.2 0 0 1 29.7 5.6Z" fill="#4a1424" stroke="#4a1424" stroke-width="1.4" stroke-linejoin="round"/><path d="M14.4 4.3L22.9 6.8M9.2 3.9L25.2 10.7M7.9 4.4L21.3 11.9M7.9 5.3L19.7 13.1M11.6 9.9L19.4 16.5M7.9 8.2L17.3 18.0M8.0 10.6L14.5 19.4M6.8 11.0L15.4 24.6M4.7 10.0L12.4 26.5M2.9 7.7L9.8 26.2M1.9 7.8L6.2 25.8M1.3 11.7L2.8 25.2M0.3 8.3L1.2 28.7M-1.2 14.9L-1.9 23.4M-1.4 8.0L-4.5 25.2M-2.6 9.3L-6.9 24.8M-3.1 7.5L-8.8 21.7M-4.5 7.9L-13.0 22.9M-6.7 9.8L-13.4 19.6M-5.5 6.5L-17.1 20.3M-9.1 8.3L-21.0 19.2M-6.2 4.8L-20.9 16.3M-10.4 6.3L-21.8 13.3M-12.1 5.7L-26.1 12.2M-10.5 3.8L-26.6 9.6M-8.4 2.1L-24.4 6.1M-13.6 2.0L-27.9 4.1M-8.7 0.3L-23.7 0.7M-8.4 -0.6L-25.8 -1.8M-9.5 -1.8L-23.1 -4.4M-7.7 -2.4L-23.3 -7.2M-9.8 -4.0L-22.0 -9.0M-8.9 -4.8L-24.5 -13.3M-12.0 -8.3L-22.4 -15.5M-9.2 -8.0L-19.5 -17.1M-8.7 -9.4L-19.7 -21.4M-7.9 -10.5L-14.9 -19.9M-5.4 -9.2L-12.2 -20.6M-4.0 -8.1L-11.0 -22.2M-3.2 -9.4L-7.7 -22.3M-2.7 -11.7L-5.2 -22.8M-1.3 -8.6L-3.7 -25.1M-0.1 -15.1L-0.3 -27.0M0.8 -11.0L1.8 -25.4M1.4 -7.7L4.8 -26.4M4.0 -12.7L7.1 -22.7M3.5 -8.3L10.6 -25.4M7.1 -13.2L13.4 -24.7M5.7 -8.5L16.0 -24.0M7.2 -8.4L16.8 -19.7M11.0 -10.2L19.4 -18.0M9.9 -7.3L19.2 -14.1M9.4 -5.6L20.2 -12.0M7.3 -3.3L24.4 -11.0M13.7 -4.8L24.1 -8.5M9.6 -2.4L23.7 -5.9M10.4 -1.3L27.6 -3.5M10.4 -0.4L24.7 -0.9M14.1 1.4L28.3 2.8M10.6 2.0L23.6 4.5" stroke="#8a3444" stroke-width="0.9" fill="none" opacity="0.45" stroke-dasharray="2.5 1.8"/><path d="M12.2 4.6L20.5 7.8M9.1 4.3L24.0 11.3M9.1 5.9L22.7 14.7M11.5 8.9L21.8 16.8M11.1 10.8L17.3 16.9M8.7 10.0L16.8 19.3M7.0 10.1L13.5 19.6M5.7 10.2L11.8 21.2M5.5 13.6L9.1 22.6M4.0 15.1L7.2 27.0M2.4 14.3L4.2 24.9M0.7 12.1L1.5 25.6M-0.6 13.3L-1.0 23.5M-1.2 9.9L-3.0 23.9M-3.7 14.7L-6.5 25.7M-5.5 15.5L-7.9 22.1M-4.4 8.8L-12.0 23.9M-8.9 14.1L-14.9 23.4M-9.8 12.3L-16.6 20.9M-7.6 7.8L-17.6 18.0M-8.6 7.0L-22.0 17.8M-10.2 6.9L-18.0 12.1M-9.4 5.0L-23.0 12.3M-15.2 5.9L-24.1 9.3M-9.7 2.8L-25.3 7.3M-14.6 2.5L-23.8 4.1M-10.9 0.6L-23.7 1.3M-14.1 -0.4L-27.7 -0.7M-14.0 -1.8L-26.6 -3.4M-9.5 -2.3L-24.8 -5.9M-15.0 -5.7L-24.9 -9.4M-11.3 -5.5L-22.7 -11.0M-9.7 -6.3L-19.7 -12.8M-13.1 -10.4L-18.0 -14.2M-7.4 -6.9L-18.6 -17.4M-6.8 -8.2L-14.6 -17.6M-7.9 -11.9L-14.6 -21.9M-4.5 -8.7L-11.5 -22.1M-6.0 -15.5L-8.6 -22.2M-3.7 -13.8L-7.3 -27.0M-2.7 -14.4L-5.0 -26.9M-0.7 -10.0L-1.6 -22.9M0.2 -10.0L0.5 -22.7M1.5 -10.0L3.9 -26.5M3.9 -15.1L6.8 -26.2M5.8 -15.4L9.9 -26.4M7.4 -15.0L9.9 -20.0M5.1 -8.4L11.9 -19.7M7.8 -10.1L16.1 -20.8M7.0 -7.1L17.1 -17.4M9.3 -7.8L17.2 -14.4M10.1 -6.8L21.9 -14.6M14.8 -7.8L24.8 -13.2M13.9 -5.9L24.4 -10.3M9.8 -2.9L23.9 -7.0M14.7 -2.7L27.4 -5.0M11.5 -0.8L25.0 -1.8M15.4 0.7L25.5 1.1M11.8 1.6L27.2 3.6M9.4 2.4L23.8 6.0" stroke="#1e060c" stroke-width="0.9" fill="none" opacity="0.35" stroke-dasharray="3 2.2"/><polygon points="4.4,1.1 1.9,1.1 3.0,2.9 0.9,1.6 1.1,4.1 0.0,2.0 -1.5,5.8 -1.0,1.8 -3.4,3.4 -2.0,1.2 -4.1,1.1 -1.9,0.0 -5.5,-1.4 -1.4,-0.8 -4.0,-3.9 -1.0,-1.6 -1.1,-3.9 -0.0,-1.8 1.2,-4.8 0.9,-1.7 3.6,-3.6 1.4,-0.8 4.3,-1.2 2.4,-0.0" fill="#e4d8d4"/></g><path d="M481.3 141.5C489.8 142.0 502.6 147.2 509.0 153.0C515.4 158.8 519.2 168.3 519.7 176.0C520.2 183.7 518.4 192.1 512.0 199.0C505.6 205.9 491.5 215.6 481.3 217.4C471.1 219.2 458.3 214.7 450.7 209.8C443.1 205.0 437.3 195.2 435.5 188.3C433.7 181.4 436.2 174.7 440.0 168.3C443.8 161.9 451.4 154.5 458.3 150.0C465.2 145.5 472.9 141.0 481.3 141.5Z" fill="#3c3c50" opacity="0.2" transform="translate(1.5 2.5)"/><ellipse cx="434" cy="187.5" rx="2.2" ry="2.4" fill="#b8c048"/><path d="M481.3 141.5C489.8 142.0 502.6 147.2 509.0 153.0C515.4 158.8 519.2 168.3 519.7 176.0C520.2 183.7 518.4 192.1 512.0 199.0C505.6 205.9 491.5 215.6 481.3 217.4C471.1 219.2 458.3 214.7 450.7 209.8C443.1 205.0 437.3 195.2 435.5 188.3C433.7 181.4 436.2 174.7 440.0 168.3C443.8 161.9 451.4 154.5 458.3 150.0C465.2 145.5 472.9 141.0 481.3 141.5Z" fill="url(#lemG)"/><ellipse cx="496.0" cy="389.8" rx="41" ry="41" fill="#3c3c50" opacity="0.2"/><g transform="translate(494.5 387.3)"><circle r="40" fill="#f0cf40"/><circle r="38.20" fill="#f6e07c"/><circle r="36.60" fill="#f9edb8"/><g transform="translate(1 1)"><circle r="29.40" fill="#efe4a4"/><path d="M4.1 1.8L28.1 4.0A28.4 28.4 0 0 1 22.2 17.7Z" fill="url(#lsF)" stroke="url(#lsF)" stroke-width="2" stroke-linejoin="round"/><path d="M2.7 4.2L20.3 19.8A28.4 28.4 0 0 1 9.1 26.9Z" fill="url(#lsF)" stroke="url(#lsF)" stroke-width="2" stroke-linejoin="round"/><path d="M-0.2 4.3L6.4 27.7A28.4 28.4 0 0 1 -9.2 26.9Z" fill="url(#lsF)" stroke="url(#lsF)" stroke-width="2" stroke-linejoin="round"/><path d="M-2.7 2.9L-11.8 25.8A28.4 28.4 0 0 1 -24.8 13.8Z" fill="url(#lsF)" stroke="url(#lsF)" stroke-width="2" stroke-linejoin="round"/><path d="M-4.8 0.8L-26.0 11.3A28.4 28.4 0 0 1 -28.3 -2.2Z" fill="url(#lsF)" stroke="url(#lsF)" stroke-width="2" stroke-linejoin="round"/><path d="M-4.3 -2.0L-28.0 -5.0A28.4 28.4 0 0 1 -22.1 -17.9Z" fill="url(#lsF)" stroke="url(#lsF)" stroke-width="2" stroke-linejoin="round"/><path d="M-2.7 -4.3L-20.2 -19.9A28.4 28.4 0 0 1 -9.2 -26.9Z" fill="url(#lsF)" stroke="url(#lsF)" stroke-width="2" stroke-linejoin="round"/><path d="M0.2 -4.2L-6.5 -27.6A28.4 28.4 0 0 1 9.7 -26.7Z" fill="url(#lsF)" stroke="url(#lsF)" stroke-width="2" stroke-linejoin="round"/><path d="M2.8 -3.1L12.3 -25.6A28.4 28.4 0 0 1 24.4 -14.5Z" fill="url(#lsF)" stroke="url(#lsF)" stroke-width="2" stroke-linejoin="round"/><path d="M4.8 -1.0L25.7 -12.0A28.4 28.4 0 0 1 28.4 1.2Z" fill="url(#lsF)" stroke="url(#lsF)" stroke-width="2" stroke-linejoin="round"/><circle r="2.80" fill="#f6f0d0"/><ellipse cx="-9" cy="-7" rx="1.6" ry="2.2" fill="#8a8250" opacity="0.6"/></g></g><ellipse cx="438.5" cy="332.8" rx="42" ry="39.6" fill="#3c3c50" opacity="0.2"/><g transform="translate(437 330.3) rotate(0) scale(1 0.9415)"><circle r="41" fill="#e08538"/><circle r="38.95" fill="#efb07c"/><circle r="37.11" fill="#f5d9bc"/><circle r="33.01" fill="#c98088"/><circle r="31.16" fill="#8a4050"/><path d="M3.6 1.0L30.5 0.8A30.5 30.5 0 0 1 26.7 14.7Z" fill="#3e1220" stroke="#3e1220" stroke-width="1.4" stroke-linejoin="round"/><path d="M2.5 2.6L25.7 16.4A30.5 30.5 0 0 1 14.8 26.6Z" fill="#34101c" stroke="#34101c" stroke-width="1.4" stroke-linejoin="round"/><path d="M0.9 4.0L13.0 27.6A30.5 30.5 0 0 1 0.4 30.5Z" fill="#4a1626" stroke="#4a1626" stroke-width="1.4" stroke-linejoin="round"/><path d="M-1.1 3.7L-1.6 30.4A30.5 30.5 0 0 1 -14.8 26.6Z" fill="#3a111e" stroke="#3a111e" stroke-width="1.4" stroke-linejoin="round"/><path d="M-3.1 3.2L-16.5 25.6A30.5 30.5 0 0 1 -24.9 17.6Z" fill="#3e1220" stroke="#3e1220" stroke-width="1.4" stroke-linejoin="round"/><path d="M-3.7 1.2L-26.0 15.9A30.5 30.5 0 0 1 -30.3 2.8Z" fill="#34101c" stroke="#34101c" stroke-width="1.4" stroke-linejoin="round"/><path d="M-3.2 -0.8L-30.4 0.8A30.5 30.5 0 0 1 -26.4 -15.3Z" fill="#4a1626" stroke="#4a1626" stroke-width="1.4" stroke-linejoin="round"/><path d="M-2.9 -3.0L-25.3 -17.0A30.5 30.5 0 0 1 -16.4 -25.7Z" fill="#3a111e" stroke="#3a111e" stroke-width="1.4" stroke-linejoin="round"/><path d="M-0.8 -3.4L-14.6 -26.7A30.5 30.5 0 0 1 0.4 -30.5Z" fill="#3e1220" stroke="#3e1220" stroke-width="1.4" stroke-linejoin="round"/><path d="M1.2 -3.7L2.4 -30.4A30.5 30.5 0 0 1 15.4 -26.3Z" fill="#34101c" stroke="#34101c" stroke-width="1.4" stroke-linejoin="round"/><path d="M2.8 -2.5L17.1 -25.2A30.5 30.5 0 0 1 26.7 -14.7Z" fill="#4a1626" stroke="#4a1626" stroke-width="1.4" stroke-linejoin="round"/><path d="M4.2 -1.0L27.6 -12.9A30.5 30.5 0 0 1 30.4 -1.2Z" fill="#3a111e" stroke="#3a111e" stroke-width="1.4" stroke-linejoin="round"/><path d="M15.6 0.5L28.1 1.0M8.8 1.4L27.9 4.5M14.9 3.7L28.7 7.2M10.4 3.7L23.6 8.4M9.0 4.4L24.7 12.2M7.8 4.7L22.4 13.7M8.6 6.5L23.0 17.6M6.6 6.6L16.6 16.7M9.6 11.9L17.0 21.1M5.5 7.9L16.5 24.0M3.6 7.2L11.0 21.9M3.7 9.2L10.5 26.0M3.8 13.3L6.7 23.4M2.6 15.2L4.7 27.4M0.7 8.6L2.2 27.3M-0.4 10.7L-0.9 26.3M-2.3 15.1L-3.7 24.6M-2.5 9.5L-6.7 25.9M-3.1 8.3L-9.4 24.6M-3.5 7.0L-12.7 25.2M-6.2 9.9L-14.4 23.0M-5.2 6.4L-16.7 20.6M-7.4 7.9L-17.5 18.6M-7.7 6.6L-19.8 17.1M-12.5 8.2L-21.4 14.1M-11.8 6.2L-25.9 13.6M-14.5 5.5L-23.6 8.9M-14.4 4.3L-22.9 6.8M-13.3 2.3L-26.3 4.6M-15.0 1.0L-25.2 1.7M-14.2 -0.6L-24.2 -1.0M-11.5 -1.6L-26.6 -3.7M-11.0 -2.7L-23.1 -5.6M-9.9 -3.5L-22.9 -8.0M-8.7 -4.5L-22.3 -11.5M-11.4 -7.4L-21.0 -13.6M-9.8 -8.0L-20.0 -16.2M-6.9 -6.8L-17.8 -17.6M-7.0 -8.7L-18.2 -22.6M-5.0 -7.3L-13.4 -19.5M-5.6 -10.8L-10.7 -20.8M-5.5 -13.1L-10.2 -24.4M-2.1 -7.8L-6.9 -26.1M-2.5 -13.2L-5.0 -26.7M-0.6 -9.5L-1.8 -29.2M0.2 -8.3L0.7 -27.6M1.1 -8.2L3.4 -26.0M3.7 -14.3L7.0 -27.0M4.2 -12.1L9.5 -27.0M5.9 -12.3L10.7 -22.6M4.1 -6.6L14.8 -23.9M9.2 -11.6L16.3 -20.6M6.5 -6.9L17.2 -18.1M7.3 -5.9L18.7 -15.0M7.0 -4.7L21.6 -14.6M11.4 -5.9L21.7 -11.3M10.7 -4.5L25.5 -10.6M11.8 -3.3L28.0 -7.9M9.7 -1.8L26.0 -4.8M14.8 -0.9L26.8 -1.7" stroke="#8a3444" stroke-width="0.9" fill="none" opacity="0.45" stroke-dasharray="2.5 1.8"/><path d="M12.5 1.3L27.0 2.9M11.4 2.5L22.0 4.9M11.6 3.6L26.7 8.2M13.1 5.6L24.1 10.3M8.8 5.2L23.3 13.9M8.3 5.9L21.3 15.1M10.2 9.4L16.3 15.0M8.1 9.3L17.2 19.7M6.6 9.2L14.4 20.0M5.1 8.7L11.3 19.1M5.1 11.5L11.2 25.4M3.9 11.0L7.6 21.8M3.0 15.2L5.5 27.4M1.1 10.1L2.7 24.5M0.1 9.6L0.4 25.7M-0.9 10.1L-2.3 25.2M-3.7 16.3L-5.5 24.4M-4.4 14.7L-6.5 21.6M-4.0 9.1L-11.5 26.1M-6.3 11.1L-11.8 20.5M-9.9 13.7L-14.5 20.1M-8.8 10.1L-18.5 21.2M-10.5 9.7L-20.7 19.0M-12.6 9.4L-20.4 15.2M-8.4 5.0L-24.2 14.6M-11.7 5.3L-25.6 11.6M-12.6 4.1L-22.6 7.4M-11.1 2.3L-24.5 5.1M-14.0 1.4L-22.6 2.2M-14.8 0.2L-26.8 0.4M-17.1 -1.4L-22.6 -1.9M-9.9 -1.9L-24.4 -4.7M-15.2 -5.0L-21.8 -7.1M-9.3 -4.2L-23.5 -10.6M-10.6 -5.9L-19.4 -10.8M-8.3 -6.1L-21.8 -16.0M-10.5 -9.2L-19.7 -17.3M-10.9 -11.9L-18.9 -20.8M-7.2 -9.6L-16.7 -22.3M-6.5 -10.8L-12.7 -21.1M-4.1 -9.5L-10.4 -24.2M-4.6 -14.3L-6.6 -20.8M-2.3 -11.6L-5.4 -27.1M-1.3 -12.6L-2.8 -27.4M0.0 -12.0L0.1 -26.8M1.5 -14.8L2.6 -25.9M2.3 -10.3L5.4 -24.6M4.4 -14.9L7.7 -26.0M4.0 -8.8L10.6 -23.2M5.1 -8.9L11.5 -20.2M9.6 -12.8L14.0 -18.8M9.7 -10.6L16.5 -18.0M8.3 -7.4L17.6 -15.8M11.5 -8.8L20.5 -15.7M11.5 -6.6L21.5 -12.3M13.7 -6.3L22.1 -10.2M14.5 -4.7L23.6 -7.7M9.6 -2.0L23.1 -4.8M10.4 -1.0L22.1 -2.1M15.3 -0.4L22.5 -0.5" stroke="#1e060c" stroke-width="0.9" fill="none" opacity="0.35" stroke-dasharray="3 2.2"/><polygon points="5.0,0.0 1.9,0.5 5.0,2.9 1.4,1.4 2.6,4.5 0.4,1.6 0.0,5.7 -0.6,2.2 -2.7,4.7 -1.6,1.6 -4.6,2.7 -2.2,0.6 -5.8,0.0 -2.1,-0.6 -3.6,-2.1 -1.7,-1.7 -3.1,-5.3 -0.5,-1.7 -0.0,-4.2 0.5,-1.9 2.2,-3.7 1.4,-1.4 3.7,-2.1 1.8,-0.5" fill="#e4d8d4"/></g><ellipse cx="357.8" cy="279.0" rx="54.8" ry="55" fill="#3c3c50" opacity="0.2"/><g transform="translate(356.3 276.5) rotate(0) scale(1 1.0037)"><circle r="53.8" fill="#f5a826"/><circle r="51.92" fill="#f9cb70"/><circle r="50.30" fill="#fce8b4"/><g transform="translate(0 0)"><circle r="45.46" fill="#fad078"/><path d="M6.8 2.3L43.7 3.7A43.8 43.8 0 0 1 37.0 23.6Z" fill="url(#orF)" stroke="url(#orF)" stroke-width="3.2279999999999998" stroke-linejoin="round"/><path d="M5.3 6.2L34.6 26.9A43.8 43.8 0 0 1 20.8 38.6Z" fill="url(#orF)" stroke="url(#orF)" stroke-width="3.2279999999999998" stroke-linejoin="round"/><path d="M1.1 7.1L17.2 40.4A43.8 43.8 0 0 1 -3.6 43.7Z" fill="url(#orF)" stroke="url(#orF)" stroke-width="3.2279999999999998" stroke-linejoin="round"/><path d="M-3.1 8.0L-7.7 43.2A43.8 43.8 0 0 1 -23.4 37.1Z" fill="url(#orF)" stroke="url(#orF)" stroke-width="3.2279999999999998" stroke-linejoin="round"/><path d="M-6.3 5.5L-26.8 34.7A43.8 43.8 0 0 1 -38.2 21.5Z" fill="url(#orF)" stroke="url(#orF)" stroke-width="3.2279999999999998" stroke-linejoin="round"/><path d="M-6.6 1.0L-40.1 17.8A43.8 43.8 0 0 1 -43.6 -4.8Z" fill="url(#orF)" stroke="url(#orF)" stroke-width="3.2279999999999998" stroke-linejoin="round"/><path d="M-7.3 -3.2L-42.9 -8.9A43.8 43.8 0 0 1 -35.5 -25.7Z" fill="url(#orF)" stroke="url(#orF)" stroke-width="3.2279999999999998" stroke-linejoin="round"/><path d="M-5.0 -6.6L-33.0 -28.9A43.8 43.8 0 0 1 -18.9 -39.5Z" fill="url(#orF)" stroke="url(#orF)" stroke-width="3.2279999999999998" stroke-linejoin="round"/><path d="M-1.5 -8.8L-15.2 -41.1A43.8 43.8 0 0 1 0.8 -43.8Z" fill="url(#orF)" stroke="url(#orF)" stroke-width="3.2279999999999998" stroke-linejoin="round"/><path d="M2.5 -7.1L4.9 -43.6A43.8 43.8 0 0 1 23.5 -37.0Z" fill="url(#orF)" stroke="url(#orF)" stroke-width="3.2279999999999998" stroke-linejoin="round"/><path d="M6.0 -5.0L26.8 -34.7A43.8 43.8 0 0 1 39.0 -20.1Z" fill="url(#orF)" stroke="url(#orF)" stroke-width="3.2279999999999998" stroke-linejoin="round"/><path d="M8.7 -1.7L40.7 -16.4A43.8 43.8 0 0 1 43.8 -0.4Z" fill="url(#orF)" stroke="url(#orF)" stroke-width="3.2279999999999998" stroke-linejoin="round"/><path d="M15.9 2.7L41.7 7.2M15.4 4.8L40.4 12.5M14.7 6.8L38.4 17.7M13.7 8.6L35.8 22.6M12.4 10.3L32.5 27.0M11.0 11.9L28.7 31.0M9.3 13.2L24.4 34.5M7.5 14.3L19.7 37.4M5.6 15.1L14.6 39.7M3.6 15.7L9.3 41.2M1.5 16.1L3.9 42.1M-0.6 16.1L-1.7 42.2M-2.7 15.9L-7.2 41.7M-4.8 15.4L-12.5 40.4M-6.8 14.7L-17.7 38.4M-8.6 13.7L-22.6 35.8M-10.3 12.4L-27.0 32.5M-11.9 11.0L-31.0 28.7M-13.2 9.3L-34.5 24.4M-14.3 7.5L-37.4 19.7M-15.1 5.6L-39.7 14.6M-15.7 3.6L-41.2 9.3M-16.1 1.5L-42.1 3.9M-16.1 -0.6L-42.2 -1.7M-15.9 -2.7L-41.7 -7.2M-15.4 -4.8L-40.4 -12.5M-14.7 -6.8L-38.4 -17.7M-13.7 -8.6L-35.8 -22.6M-12.4 -10.3L-32.5 -27.0M-11.0 -11.9L-28.7 -31.0M-9.3 -13.2L-24.4 -34.5M-7.5 -14.3L-19.7 -37.4M-5.6 -15.1L-14.6 -39.7M-3.6 -15.7L-9.3 -41.2M-1.5 -16.1L-3.9 -42.1M0.6 -16.1L1.7 -42.2M2.7 -15.9L7.2 -41.7M4.8 -15.4L12.5 -40.4M6.8 -14.7L17.7 -38.4M8.6 -13.7L22.6 -35.8M10.3 -12.4L27.0 -32.5M11.9 -11.0L31.0 -28.7M13.2 -9.3L34.5 -24.4M14.3 -7.5L37.4 -19.7M15.1 -5.6L39.7 -14.6M15.7 -3.6L41.2 -9.3M16.1 -1.5L42.1 -3.9M16.1 0.6L42.2 1.7" stroke="#f8c458" stroke-width="0.8" fill="none" opacity="0.4"/><circle r="8.23" fill="#fbd98e" opacity="0.6"/><polygon points="8.9,0.9 3.1,1.2 7.3,5.3 2.6,3.2 4.0,8.8 0.7,4.2 -1.0,9.6 -1.5,3.9 -5.9,8.3 -3.3,2.7 -9.1,4.1 -3.7,0.6 -9.5,-1.0 -3.8,-1.4 -8.3,-6.0 -2.6,-3.2 -3.7,-8.2 -0.6,-3.4 0.9,-8.6 1.3,-3.3 5.6,-7.8 3.2,-2.6 7.6,-3.4 3.8,-0.6" fill="#f3eee2"/></g></g><ellipse cx="264.3" cy="402.8" rx="40.3" ry="40.8" fill="#3c3c50" opacity="0.2"/><g transform="translate(262.8 400.3) rotate(0) scale(1 1.0127)"><circle r="39.3" fill="#e08538"/><circle r="37.33" fill="#efb07c"/><circle r="35.57" fill="#f4dcc0"/><circle r="32.42" fill="#c98088"/><circle r="30.65" fill="#8a4050"/><path d="M3.7 2.4L27.9 11.0A30.0 30.0 0 0 1 21.4 20.9Z" fill="#34101c" stroke="#34101c" stroke-width="1.4" stroke-linejoin="round"/><path d="M2.0 3.6L20.0 22.3A30.0 30.0 0 0 1 9.1 28.5Z" fill="#2c0c18" stroke="#2c0c18" stroke-width="1.4" stroke-linejoin="round"/><path d="M-0.1 3.5L7.2 29.1A30.0 30.0 0 0 1 -8.3 28.8Z" fill="#40121f" stroke="#40121f" stroke-width="1.4" stroke-linejoin="round"/><path d="M-2.2 3.5L-10.2 28.2A30.0 30.0 0 0 1 -20.9 21.4Z" fill="#300e1a" stroke="#300e1a" stroke-width="1.4" stroke-linejoin="round"/><path d="M-3.5 2.0L-22.3 20.0A30.0 30.0 0 0 1 -28.6 8.9Z" fill="#34101c" stroke="#34101c" stroke-width="1.4" stroke-linejoin="round"/><path d="M-3.7 -0.0L-29.1 7.0A30.0 30.0 0 0 1 -29.1 -7.1Z" fill="#2c0c18" stroke="#2c0c18" stroke-width="1.4" stroke-linejoin="round"/><path d="M-3.6 -2.0L-28.6 -9.0A30.0 30.0 0 0 1 -22.4 -19.9Z" fill="#40121f" stroke="#40121f" stroke-width="1.4" stroke-linejoin="round"/><path d="M-1.9 -3.2L-21.0 -21.4A30.0 30.0 0 0 1 -8.9 -28.6Z" fill="#300e1a" stroke="#300e1a" stroke-width="1.4" stroke-linejoin="round"/><path d="M0.0 -3.6L-7.0 -29.1A30.0 30.0 0 0 1 7.6 -29.0Z" fill="#34101c" stroke="#34101c" stroke-width="1.4" stroke-linejoin="round"/><path d="M2.1 -3.6L9.5 -28.4A30.0 30.0 0 0 1 20.2 -22.1Z" fill="#2c0c18" stroke="#2c0c18" stroke-width="1.4" stroke-linejoin="round"/><path d="M3.4 -2.0L21.6 -20.7A30.0 30.0 0 0 1 28.4 -9.4Z" fill="#40121f" stroke="#40121f" stroke-width="1.4" stroke-linejoin="round"/><path d="M3.2 0.1L29.0 -7.5A30.0 30.0 0 0 1 28.5 9.1Z" fill="#300e1a" stroke="#300e1a" stroke-width="1.4" stroke-linejoin="round"/><path d="M14.1 5.0L26.5 9.4M13.4 6.3L21.3 10.0M6.6 3.9L20.1 11.9M10.7 8.2L20.5 15.9M8.0 7.8L20.5 19.9M7.6 9.0L15.5 18.3M6.3 9.1L16.0 23.1M4.8 8.7L13.6 24.5M4.7 10.8L9.7 22.3M3.4 11.7L6.6 22.6M1.9 10.6L4.3 24.6M0.9 13.6L1.6 24.8M-0.3 8.6L-0.9 26.2M-1.4 12.5L-3.3 28.4M-1.9 7.7L-6.2 25.4M-3.7 10.4L-7.9 22.6M-4.7 10.1L-9.9 21.2M-5.0 8.1L-13.1 21.0M-5.9 8.0L-17.1 23.1M-5.7 6.1L-17.1 18.4M-6.4 5.3L-19.4 16.0M-10.5 7.4L-21.1 14.9M-12.4 7.0L-21.8 12.3M-10.3 4.2L-26.3 10.7M-9.0 2.8L-23.6 7.5M-13.7 2.7L-25.6 5.0M-11.5 1.0L-28.1 2.4M-11.1 -0.3L-27.0 -0.8M-10.7 -1.5L-25.4 -3.5M-10.8 -2.4L-27.7 -6.2M-9.9 -3.4L-25.2 -8.7M-8.1 -3.9L-23.2 -11.2M-6.8 -4.2L-20.1 -12.5M-11.5 -9.0L-18.4 -14.4M-9.2 -8.4L-18.2 -16.7M-5.1 -6.1L-16.6 -19.7M-5.9 -8.3L-15.7 -22.2M-6.8 -12.5L-13.4 -24.7M-5.4 -13.1L-9.1 -22.3M-2.9 -9.7L-7.7 -25.7M-2.9 -14.2L-5.0 -24.8M-1.0 -14.9L-1.9 -28.7M0.3 -14.2L0.6 -29.1M1.5 -13.3L3.2 -27.3M2.3 -9.5L5.6 -23.4M4.9 -14.0L8.4 -24.0M5.2 -11.3L10.8 -23.3M5.9 -9.5L13.0 -21.0M8.3 -11.2L16.0 -21.8M7.8 -8.4L18.1 -19.5M11.1 -9.5L21.1 -18.0M8.4 -5.9L21.9 -15.3M12.9 -7.3L20.3 -11.4M9.0 -3.7L24.2 -10.0M8.9 -2.8L27.7 -8.8M9.2 -1.6L25.4 -4.4M8.6 -0.8L24.1 -2.4M10.0 0.5L24.5 1.1M8.5 1.0L28.9 3.3M14.3 3.6L27.3 6.8" stroke="#8a3444" stroke-width="0.9" fill="none" opacity="0.45" stroke-dasharray="2.5 1.8"/><path d="M10.2 4.5L20.7 9.0M8.5 4.6L19.9 10.8M10.6 7.5L17.5 12.5M11.9 10.2L20.7 17.7M10.0 10.9L18.7 20.3M7.3 9.7L15.2 20.2M5.0 8.1L12.2 19.8M4.3 9.2L9.4 19.9M4.0 11.3L9.4 26.3M3.5 15.2L6.0 25.8M1.4 11.6L2.9 23.9M0.4 14.1L0.7 27.2M-1.1 11.4L-2.2 22.4M-2.3 13.5L-3.9 22.7M-3.1 11.1L-6.3 22.1M-5.4 13.2L-9.6 23.5M-7.0 13.0L-10.9 20.1M-5.9 8.2L-14.9 20.6M-9.8 11.1L-16.4 18.6M-10.4 9.4L-19.3 17.6M-8.4 6.5L-19.4 15.2M-8.5 5.1L-22.7 13.6M-11.6 5.5L-22.6 10.7M-10.9 3.6L-24.0 7.9M-13.9 3.2L-23.0 5.2M-12.7 1.7L-25.3 3.4M-10.2 0.1L-24.5 0.3M-10.6 -0.9L-22.1 -2.0M-9.2 -1.9L-24.3 -5.1M-9.0 -2.7L-22.3 -6.6M-11.4 -4.6L-25.6 -10.4M-10.5 -5.6L-23.1 -12.3M-7.6 -5.4L-18.8 -13.3M-12.2 -10.4L-18.6 -15.8M-8.9 -9.3L-17.1 -17.9M-8.8 -11.3L-16.2 -20.8M-6.9 -11.4L-13.8 -22.8M-5.7 -12.7L-8.9 -19.9M-4.7 -13.5L-7.7 -22.4M-2.6 -11.7L-5.6 -25.0M-1.7 -14.2L-3.3 -27.5M-0.2 -14.6L-0.3 -26.2M1.0 -13.9L1.9 -25.6M2.6 -14.8L4.0 -22.6M3.8 -12.6L7.7 -25.2M5.1 -11.7L11.1 -25.5M6.5 -11.9L13.6 -24.7M8.3 -12.1L15.8 -23.0M9.7 -11.6L16.6 -19.8M11.2 -10.4L19.9 -18.6M10.2 -7.9L20.2 -15.7M14.2 -8.4L23.1 -13.7M8.8 -4.0L22.2 -10.0M15.6 -5.1L25.2 -8.3M14.7 -3.5L24.4 -5.8M14.0 -1.6L27.1 -3.2M16.6 -0.2L24.8 -0.3M14.2 1.2L25.2 2.2M16.3 2.8L23.3 4.1M9.1 2.8L21.8 6.6" stroke="#1e060c" stroke-width="0.9" fill="none" opacity="0.35" stroke-dasharray="3 2.2"/><polygon points="5.5,1.7 1.5,1.0 3.1,3.3 1.0,2.0 1.0,4.3 -0.1,2.1 -1.5,4.8 -1.2,1.9 -3.6,3.3 -1.6,0.9 -4.3,1.0 -1.9,-0.1 -3.8,-1.2 -1.4,-0.9 -2.9,-3.1 -0.8,-1.6 -1.2,-5.3 0.1,-2.3 1.4,-4.4 0.9,-1.5 3.3,-3.1 1.8,-1.0 4.7,-1.1 1.7,0.1" fill="#e4d8d4"/></g><ellipse cx="369.8" cy="476.5" rx="40.3" ry="41.8" fill="#3c3c50" opacity="0.2"/><g transform="translate(368.3 474) rotate(0) scale(1 1.0382)"><circle r="39.3" fill="#e08538"/><circle r="37.33" fill="#efb07c"/><circle r="35.57" fill="#f5d8b4"/><circle r="33.99" fill="#c98088"/><circle r="32.23" fill="#8a4050"/><path d="M4.1 1.6L31.0 5.8A31.5 31.5 0 0 1 26.5 17.1Z" fill="#5c1422" stroke="#5c1422" stroke-width="1.4" stroke-linejoin="round"/><path d="M2.9 3.2L25.3 18.8A31.5 31.5 0 0 1 15.9 27.2Z" fill="#4c101c" stroke="#4c101c" stroke-width="1.4" stroke-linejoin="round"/><path d="M0.8 3.5L14.1 28.2A31.5 31.5 0 0 1 -1.0 31.5Z" fill="#6a1a28" stroke="#6a1a28" stroke-width="1.4" stroke-linejoin="round"/><path d="M-1.3 4.8L-3.0 31.4A31.5 31.5 0 0 1 -13.3 28.6Z" fill="#541220" stroke="#541220" stroke-width="1.4" stroke-linejoin="round"/><path d="M-2.6 2.9L-15.1 27.7A31.5 31.5 0 0 1 -25.8 18.2Z" fill="#5c1422" stroke="#5c1422" stroke-width="1.4" stroke-linejoin="round"/><path d="M-3.7 1.2L-26.9 16.5A31.5 31.5 0 0 1 -31.4 2.9Z" fill="#4c101c" stroke="#4c101c" stroke-width="1.4" stroke-linejoin="round"/><path d="M-4.3 -0.7L-31.5 0.9A31.5 31.5 0 0 1 -29.5 -11.3Z" fill="#6a1a28" stroke="#6a1a28" stroke-width="1.4" stroke-linejoin="round"/><path d="M-3.1 -2.4L-28.7 -13.1A31.5 31.5 0 0 1 -19.9 -24.4Z" fill="#541220" stroke="#541220" stroke-width="1.4" stroke-linejoin="round"/><path d="M-2.1 -4.3L-18.3 -25.6A31.5 31.5 0 0 1 -8.3 -30.4Z" fill="#5c1422" stroke="#5c1422" stroke-width="1.4" stroke-linejoin="round"/><path d="M0.2 -3.6L-6.3 -30.9A31.5 31.5 0 0 1 9.0 -30.2Z" fill="#4c101c" stroke="#4c101c" stroke-width="1.4" stroke-linejoin="round"/><path d="M2.6 -4.6L10.9 -29.6A31.5 31.5 0 0 1 19.6 -24.7Z" fill="#6a1a28" stroke="#6a1a28" stroke-width="1.4" stroke-linejoin="round"/><path d="M2.9 -1.9L21.1 -23.4A31.5 31.5 0 0 1 29.9 -9.9Z" fill="#541220" stroke="#541220" stroke-width="1.4" stroke-linejoin="round"/><path d="M4.6 -0.3L30.5 -8.0A31.5 31.5 0 0 1 31.3 3.8Z" fill="#5c1422" stroke="#5c1422" stroke-width="1.4" stroke-linejoin="round"/><path d="M7.9 1.5L25.4 4.8M13.2 4.2L27.6 8.7M7.5 3.1L24.1 10.1M13.7 7.1L26.6 13.8M13.5 8.5L23.5 14.8M6.9 5.4L21.2 16.6M8.4 8.2L18.8 18.2M7.5 9.2L16.6 20.2M5.6 8.3L15.1 22.3M5.0 8.6L15.4 26.4M4.9 11.3L11.3 26.2M3.7 11.7L8.1 25.3M1.9 8.1L5.8 24.3M1.0 8.1L3.6 28.3M0.3 9.9L0.9 26.2M-0.7 9.7L-2.0 29.6M-1.4 8.5L-4.1 24.4M-3.5 12.2L-7.2 25.0M-3.0 7.9L-10.7 27.9M-6.1 11.9L-11.2 21.8M-7.7 12.6L-14.6 23.9M-5.9 8.0L-14.6 19.8M-6.5 7.0L-18.4 19.8M-11.6 10.0L-20.7 17.9M-7.4 5.3L-24.6 17.6M-10.4 5.9L-25.9 14.9M-14.4 6.9L-23.7 11.3M-14.0 4.7L-28.6 9.6M-8.4 2.0L-25.3 6.1M-15.2 2.2L-28.3 4.0M-10.8 0.8L-26.3 1.8M-9.9 -0.3L-27.5 -0.9M-10.1 -1.4L-26.6 -3.7M-12.4 -3.3L-28.1 -7.4M-7.8 -2.9L-28.0 -10.3M-8.8 -3.9L-26.5 -11.7M-11.2 -6.7L-23.4 -14.0M-9.3 -6.8L-20.5 -15.1M-6.8 -5.8L-18.5 -15.9M-10.5 -11.7L-17.7 -19.6M-6.3 -8.1L-17.9 -23.1M-5.0 -8.0L-15.9 -25.3M-3.6 -7.6L-11.7 -24.5M-4.9 -12.3L-9.7 -24.6M-2.9 -10.1L-7.7 -27.0M-2.1 -11.8L-4.9 -28.1M-1.2 -15.6L-2.1 -26.9M0.5 -15.5L0.9 -28.2M1.7 -14.3L3.5 -28.5M2.3 -11.2L5.0 -24.7M3.9 -13.0L7.6 -25.2M3.2 -7.6L9.4 -22.4M5.4 -9.5L13.2 -23.5M8.8 -12.6L16.4 -23.5M10.2 -12.4L16.1 -19.6M9.5 -9.3L18.6 -18.2M10.2 -8.0L22.6 -17.7M12.2 -8.3L21.5 -14.6M12.4 -6.5L23.3 -12.2M9.9 -4.2L28.1 -11.8M11.4 -3.4L26.7 -7.9M10.0 -1.9L24.2 -4.7M12.7 -1.5L27.8 -3.2M13.1 0.2L29.7 0.5M12.0 1.4L26.7 3.0" stroke="#8a3444" stroke-width="0.9" fill="none" opacity="0.45" stroke-dasharray="2.5 1.8"/><path d="M12.3 3.1L27.1 6.9M10.0 3.7L27.6 10.0M14.2 6.7L23.9 11.4M12.2 7.4L20.0 12.1M12.6 9.1L20.3 14.6M12.2 10.7L21.0 18.3M8.5 9.5L15.7 17.5M6.8 9.2L16.2 22.0M6.1 10.2L11.6 19.4M6.9 14.5L11.6 24.1M3.8 10.9L9.1 26.2M3.7 13.9L6.4 23.9M2.4 13.9L4.6 26.5M0.7 14.5L1.2 26.1M-0.6 14.7L-1.0 25.4M-1.8 15.1L-3.0 25.1M-2.3 10.8L-5.2 24.6M-4.8 14.1L-8.4 24.6M-5.1 11.2L-10.5 22.7M-7.6 13.1L-12.8 22.1M-5.8 8.0L-15.5 21.3M-11.1 12.6L-15.8 17.9M-10.2 9.5L-21.3 20.0M-11.7 9.4L-21.2 16.9M-10.6 6.5L-21.6 13.3M-13.4 7.1L-20.3 10.9M-10.1 3.9L-22.3 8.5M-13.2 3.6L-26.9 7.3M-11.4 2.2L-24.7 4.8M-11.2 0.8L-28.9 2.0M-15.1 -0.4L-24.4 -0.6M-16.8 -1.9L-26.6 -3.1M-14.3 -2.8L-28.8 -5.6M-10.4 -3.2L-22.9 -7.1M-9.3 -3.9L-20.8 -8.8M-10.4 -5.5L-23.0 -12.2M-11.9 -7.7L-23.0 -14.8M-11.2 -9.0L-20.5 -16.5M-10.0 -10.2L-19.0 -19.3M-10.4 -12.6L-14.8 -17.9M-9.6 -13.6L-16.3 -23.3M-8.4 -14.7L-13.3 -23.3M-5.8 -14.2L-9.5 -23.3M-5.0 -15.0L-8.7 -26.2M-2.5 -11.6L-5.2 -24.6M-1.3 -13.3L-2.3 -23.9M0.1 -17.5L0.1 -23.8M1.1 -15.5L1.7 -25.2M2.7 -14.9L4.3 -24.1M3.1 -10.9L6.6 -23.2M4.8 -12.2L10.5 -26.9M7.5 -15.3L10.7 -21.9M5.6 -8.9L13.1 -21.0M7.9 -9.8L17.9 -22.1M10.7 -10.9L16.7 -17.0M8.3 -7.3L18.3 -16.0M8.9 -6.5L22.2 -16.1M10.4 -6.0L21.1 -12.2M9.6 -4.5L23.2 -11.0M13.1 -4.7L22.9 -8.3M11.5 -2.6L27.9 -6.3M17.0 -2.0L24.0 -2.9M13.5 -0.3L28.8 -0.7M14.0 0.8L24.4 1.3M12.5 2.1L28.4 4.7" stroke="#1e060c" stroke-width="0.9" fill="none" opacity="0.35" stroke-dasharray="3 2.2"/><polygon points="5.3,0.8 1.8,0.7 3.2,2.4 1.1,1.4 2.1,4.3 0.4,1.8 -0.1,5.1 -0.4,1.5 -2.4,4.2 -1.6,1.7 -4.9,3.2 -2.0,0.7 -5.3,0.5 -2.0,-0.3 -5.4,-2.2 -1.8,-1.3 -3.1,-3.7 -0.9,-1.8 -1.2,-5.6 0.1,-2.0 1.4,-4.9 0.9,-1.6 3.6,-3.8 1.6,-1.1 5.5,-1.9 2.3,-0.2" fill="#e4d8d4"/></g><ellipse cx="419.5" cy="414.5" rx="41.4" ry="41.6" fill="#3c3c50" opacity="0.2"/><g transform="translate(418 412) rotate(0) scale(1 1.0050)"><circle r="40.4" fill="#e2703a"/><circle r="38.38" fill="#ec9070"/><circle r="36.56" fill="#f2b09c"/><circle r="34.14" fill="#d8606a"/><circle r="32.32" fill="#a84452"/><path d="M3.6 1.4L31.3 4.5A31.6 31.6 0 0 1 26.1 17.8Z" fill="#7e1526" stroke="#7e1526" stroke-width="1.4" stroke-linejoin="round"/><path d="M3.3 3.6L24.9 19.4A31.6 31.6 0 0 1 16.9 26.7Z" fill="#6c1020" stroke="#6c1020" stroke-width="1.4" stroke-linejoin="round"/><path d="M1.0 3.7L15.1 27.8A31.6 31.6 0 0 1 1.1 31.6Z" fill="#8a1c2c" stroke="#8a1c2c" stroke-width="1.4" stroke-linejoin="round"/><path d="M-1.0 3.5L-0.9 31.6A31.6 31.6 0 0 1 -15.8 27.4Z" fill="#741322" stroke="#741322" stroke-width="1.4" stroke-linejoin="round"/><path d="M-2.6 2.3L-17.5 26.4A31.6 31.6 0 0 1 -28.3 14.2Z" fill="#7e1526" stroke="#7e1526" stroke-width="1.4" stroke-linejoin="round"/><path d="M-4.1 0.8L-29.1 12.3A31.6 31.6 0 0 1 -31.6 -0.8Z" fill="#6c1020" stroke="#6c1020" stroke-width="1.4" stroke-linejoin="round"/><path d="M-4.0 -1.2L-31.5 -2.8A31.6 31.6 0 0 1 -27.6 -15.5Z" fill="#8a1c2c" stroke="#8a1c2c" stroke-width="1.4" stroke-linejoin="round"/><path d="M-2.8 -2.9L-26.5 -17.2A31.6 31.6 0 0 1 -16.7 -26.9Z" fill="#741322" stroke="#741322" stroke-width="1.4" stroke-linejoin="round"/><path d="M-0.9 -3.6L-14.9 -27.9A31.6 31.6 0 0 1 -0.4 -31.6Z" fill="#7e1526" stroke="#7e1526" stroke-width="1.4" stroke-linejoin="round"/><path d="M1.1 -3.8L1.6 -31.6A31.6 31.6 0 0 1 15.0 -27.8Z" fill="#6c1020" stroke="#6c1020" stroke-width="1.4" stroke-linejoin="round"/><path d="M2.7 -2.7L16.8 -26.8A31.6 31.6 0 0 1 27.0 -16.5Z" fill="#8a1c2c" stroke="#8a1c2c" stroke-width="1.4" stroke-linejoin="round"/><path d="M3.2 -0.7L27.9 -14.8A31.6 31.6 0 0 1 31.5 2.5Z" fill="#741322" stroke="#741322" stroke-width="1.4" stroke-linejoin="round"/><path d="M9.6 1.0L25.2 2.5M9.0 1.8L29.0 5.9M14.5 4.6L27.6 8.7M9.4 4.1L24.7 10.8M9.8 5.4L26.4 14.6M11.9 8.3L23.2 16.2M7.5 6.3L21.4 18.1M6.7 7.4L17.4 19.2M7.1 9.4L16.3 21.5M6.5 11.3L13.0 22.6M5.2 11.0L10.8 22.9M2.8 8.1L9.3 26.9M3.2 15.0L5.8 27.5M1.6 12.5L3.4 27.6M0.3 12.4L0.8 27.4M-0.9 11.6L-2.3 29.6M-2.1 10.5L-5.1 25.3M-3.8 12.0L-7.8 25.0M-4.5 10.5L-11.1 26.0M-5.6 9.6L-13.9 24.0M-7.8 11.0L-14.9 21.1M-10.1 11.8L-16.4 19.1M-7.5 6.9L-20.2 18.5M-8.0 6.0L-20.3 15.3M-7.3 4.2L-21.8 12.5M-10.1 4.6L-23.2 10.5M-15.2 5.0L-24.3 8.0M-11.0 2.4L-30.0 6.6M-15.2 1.8L-28.3 3.3M-11.6 0.3L-28.8 0.8M-8.8 -0.7L-30.6 -2.3M-13.0 -2.8L-24.1 -5.2M-15.3 -4.9L-27.9 -8.9M-10.7 -4.7L-25.9 -11.4M-10.5 -6.1L-21.4 -12.4M-13.0 -8.9L-23.8 -16.3M-6.9 -6.2L-18.5 -16.7M-7.8 -8.5L-18.4 -20.1M-8.7 -11.3L-17.8 -23.3M-5.8 -10.0L-13.8 -23.7M-5.0 -10.7L-11.2 -23.9M-5.1 -15.0L-9.5 -27.8M-3.2 -13.1L-7.0 -28.7M-1.9 -15.1L-3.8 -30.1M-0.4 -13.1L-0.9 -26.7M1.1 -12.5L2.6 -29.7M3.0 -15.0L5.1 -25.3M3.4 -10.7L7.8 -24.2M5.2 -11.7L10.4 -23.5M6.0 -10.4L14.3 -24.8M6.3 -8.6L16.4 -22.4M6.8 -7.8L18.3 -20.8M10.2 -9.1L19.4 -17.3M10.5 -7.7L21.4 -15.8M9.6 -5.6L25.2 -14.8M13.3 -6.3L23.7 -11.1M10.1 -3.6L23.6 -8.4M15.8 -3.3L26.3 -5.6M15.1 -2.0L29.5 -3.9M10.5 -0.3L27.4 -0.7" stroke="#b83a4a" stroke-width="0.9" fill="none" opacity="0.45" stroke-dasharray="2.5 1.8"/><path d="M11.3 1.5L25.2 3.4M10.6 2.6L26.2 6.4M16.0 5.9L27.7 10.1M10.6 5.4L25.0 12.7M14.1 8.9L21.7 13.7M12.2 9.9L21.5 17.4M8.8 8.8L16.7 16.8M11.1 13.4L14.6 17.6M6.8 10.1L14.4 21.4M5.0 9.9L10.4 20.9M4.8 11.5L10.6 25.7M4.0 14.4L7.0 25.3M2.2 12.8L3.9 22.6M0.6 15.6L1.0 23.3M-0.5 16.0L-0.9 26.2M-2.5 15.6L-3.8 23.4M-3.0 10.9L-6.2 22.8M-5.9 15.2L-8.9 23.1M-6.9 14.0L-11.0 22.2M-9.5 14.9L-12.6 19.9M-10.8 13.0L-18.9 22.9M-7.8 8.1L-17.9 18.5M-13.1 11.1L-20.4 17.2M-11.5 7.4L-22.0 14.1M-9.6 4.8L-21.7 10.8M-13.5 5.1L-26.4 9.9M-15.4 3.9L-26.1 6.6M-13.8 2.1L-23.9 3.7M-17.1 1.1L-26.3 1.8M-14.9 -0.4L-29.7 -0.8M-13.5 -2.1L-25.6 -4.0M-14.2 -3.8L-25.2 -6.7M-15.7 -6.2L-26.2 -10.3M-13.8 -7.1L-21.4 -10.9M-10.0 -6.4L-20.3 -13.0M-8.9 -7.4L-21.9 -18.1M-9.1 -9.2L-16.0 -16.2M-9.6 -11.4L-17.8 -21.1M-8.1 -12.1L-13.2 -19.8M-7.3 -14.3L-12.8 -25.1M-5.2 -13.4L-8.2 -21.1M-3.6 -12.5L-6.4 -22.2M-3.1 -17.1L-5.0 -27.0M-0.9 -15.2L-1.6 -28.8M0.7 -13.1L1.3 -25.4M2.9 -17.2L4.0 -23.4M3.9 -14.4L6.6 -24.2M4.3 -11.1L10.0 -26.1M6.5 -12.9L10.4 -20.6M9.6 -14.5L15.5 -23.4M9.6 -12.2L14.5 -18.4M8.8 -8.9L18.3 -18.5M7.9 -6.6L19.7 -16.5M9.2 -6.2L20.7 -14.0M8.7 -4.7L26.0 -14.0M15.6 -6.5L23.7 -9.8M12.6 -3.7L25.2 -7.4M13.8 -2.5L22.3 -4.1M15.4 -1.0L28.6 -1.9M13.0 0.4L29.3 1.0" stroke="#1e060c" stroke-width="0.9" fill="none" opacity="0.35" stroke-dasharray="3 2.2"/><polygon points="4.7,0.2 1.6,0.5 3.8,2.5 1.6,1.7 2.2,4.2 0.5,2.1 -0.3,5.9 -0.6,2.0 -2.4,3.7 -1.5,1.3 -4.2,2.1 -2.0,0.4 -5.3,-0.3 -2.3,-0.7 -4.6,-2.9 -1.4,-1.5 -2.6,-5.1 -0.4,-2.0 0.2,-4.4 0.7,-2.1 2.5,-3.9 1.3,-1.2 4.3,-2.2 2.0,-0.4" fill="#e4d8d4"/></g><ellipse cx="341.3" cy="378.5" rx="50.8" ry="49.5" fill="#3c3c50" opacity="0.2"/><g transform="translate(339.8 376) rotate(0) scale(1 0.9739)"><circle r="49.8" fill="#f5a826"/><circle r="48.06" fill="#f9cb70"/><circle r="46.56" fill="#fce8b4"/><g transform="translate(0 1)"><circle r="44.82" fill="#f9bc48"/><path d="M4.1 4.0L38.6 19.7A43.3 43.3 0 0 1 21.0 37.9Z" fill="url(#orF)" stroke="url(#orF)" stroke-width="2.9879999999999995" stroke-linejoin="round"/><path d="M0.6 5.4L17.7 39.6A43.3 43.3 0 0 1 -9.1 42.4Z" fill="url(#orF)" stroke="url(#orF)" stroke-width="2.9879999999999995" stroke-linejoin="round"/><path d="M-3.5 5.9L-12.8 41.4A43.3 43.3 0 0 1 -30.2 31.0Z" fill="url(#orF)" stroke="url(#orF)" stroke-width="2.9879999999999995" stroke-linejoin="round"/><path d="M-5.7 2.8L-32.8 28.3A43.3 43.3 0 0 1 -42.5 8.3Z" fill="url(#orF)" stroke="url(#orF)" stroke-width="2.9879999999999995" stroke-linejoin="round"/><path d="M-5.9 -1.0L-43.1 4.5A43.3 43.3 0 0 1 -39.0 -18.8Z" fill="url(#orF)" stroke="url(#orF)" stroke-width="2.9879999999999995" stroke-linejoin="round"/><path d="M-3.9 -4.3L-37.2 -22.2A43.3 43.3 0 0 1 -19.1 -38.9Z" fill="url(#orF)" stroke="url(#orF)" stroke-width="2.9879999999999995" stroke-linejoin="round"/><path d="M-0.7 -6.4L-15.6 -40.4A43.3 43.3 0 0 1 6.2 -42.9Z" fill="url(#orF)" stroke="url(#orF)" stroke-width="2.9879999999999995" stroke-linejoin="round"/><path d="M3.0 -5.5L9.9 -42.2A43.3 43.3 0 0 1 29.7 -31.5Z" fill="url(#orF)" stroke="url(#orF)" stroke-width="2.9879999999999995" stroke-linejoin="round"/><path d="M5.3 -2.5L32.4 -28.8A43.3 43.3 0 0 1 42.8 -6.9Z" fill="url(#orF)" stroke="url(#orF)" stroke-width="2.9879999999999995" stroke-linejoin="round"/><path d="M6.9 1.1L43.2 -3.1A43.3 43.3 0 0 1 40.1 16.3Z" fill="url(#orF)" stroke="url(#orF)" stroke-width="2.9879999999999995" stroke-linejoin="round"/><path d="M12.6 8.1L35.1 22.5M11.2 9.9L31.1 27.7M9.5 11.6L26.4 32.2M7.5 12.9L21.1 36.0M5.4 13.9L15.2 38.8M3.2 14.6L8.9 40.7M0.9 14.9L2.4 41.6M-1.5 14.9L-4.1 41.5M-3.8 14.5L-10.5 40.3M-6.0 13.7L-16.7 38.2M-8.1 12.6L-22.5 35.1M-9.9 11.2L-27.7 31.1M-11.6 9.5L-32.2 26.4M-12.9 7.5L-36.0 21.1M-13.9 5.4L-38.8 15.2M-14.6 3.2L-40.7 8.9M-14.9 0.9L-41.6 2.4M-14.9 -1.5L-41.5 -4.1M-14.5 -3.8L-40.3 -10.5M-13.7 -6.0L-38.2 -16.7M-12.6 -8.1L-35.1 -22.5M-11.2 -9.9L-31.1 -27.7M-9.5 -11.6L-26.4 -32.2M-7.5 -12.9L-21.1 -36.0M-5.4 -13.9L-15.2 -38.8M-3.2 -14.6L-8.9 -40.7M-0.9 -14.9L-2.4 -41.6M1.5 -14.9L4.1 -41.5M3.8 -14.5L10.5 -40.3M6.0 -13.7L16.7 -38.2M8.1 -12.6L22.5 -35.1M9.9 -11.2L27.7 -31.1M11.6 -9.5L32.2 -26.4M12.9 -7.5L36.0 -21.1M13.9 -5.4L38.8 -15.2M14.6 -3.2L40.7 -8.9M14.9 -0.9L41.6 -2.4M14.9 1.5L41.5 4.1M14.5 3.8L40.3 10.5M13.7 6.0L38.2 16.7" stroke="#f8c458" stroke-width="0.8" fill="none" opacity="0.4"/><circle r="6.27" fill="#fbd98e" opacity="0.6"/><polygon points="5.7,3.1 2.1,2.2 2.9,6.2 0.4,3.1 -1.2,6.5 -1.5,2.7 -4.6,4.3 -2.6,1.2 -6.9,0.9 -2.5,-0.5 -5.4,-3.0 -2.0,-2.1 -3.2,-6.8 -0.4,-3.2 1.4,-7.6 1.5,-2.8 5.8,-5.5 2.4,-1.1 6.2,-0.8 2.6,0.5" fill="#f3eee2"/></g></g><path d="M288.0 280.5C295.8 281.2 306.6 285.6 313.0 291.5C319.4 297.4 325.8 308.2 326.7 316.0C327.6 323.8 324.3 332.1 318.4 338.2C312.4 344.3 300.6 351.7 291.0 352.6C281.4 353.5 268.3 348.2 260.7 343.7C253.1 339.2 247.3 332.0 245.5 325.8C243.7 319.6 246.2 313.0 249.7 306.6C253.1 300.2 259.8 291.8 266.2 287.4C272.6 283.0 280.2 279.8 288.0 280.5Z" fill="#3c3c50" opacity="0.2" transform="translate(1.5 2.5)"/><ellipse cx="244.5" cy="327" rx="2.2" ry="2.4" fill="#b8c048"/><path d="M288.0 280.5C295.8 281.2 306.6 285.6 313.0 291.5C319.4 297.4 325.8 308.2 326.7 316.0C327.6 323.8 324.3 332.1 318.4 338.2C312.4 344.3 300.6 351.7 291.0 352.6C281.4 353.5 268.3 348.2 260.7 343.7C253.1 339.2 247.3 332.0 245.5 325.8C243.7 319.6 246.2 313.0 249.7 306.6C253.1 300.2 259.8 291.8 266.2 287.4C272.6 283.0 280.2 279.8 288.0 280.5Z" fill="url(#lemG)"/><ellipse cx="216.5" cy="585.5" rx="41" ry="41.5" fill="#3c3c50" opacity="0.2"/><g transform="translate(215 583) rotate(0) scale(1 1.0125)"><circle r="40" fill="#e08538"/><circle r="38.00" fill="#efb07c"/><circle r="36.20" fill="#f0c0a0"/><circle r="33.00" fill="#d8606a"/><circle r="31.20" fill="#a84452"/><path d="M3.4 2.3L28.4 11.1A30.5 30.5 0 0 1 21.3 21.8Z" fill="#7a1626" stroke="#7a1626" stroke-width="1.4" stroke-linejoin="round"/><path d="M1.5 3.1L19.9 23.1A30.5 30.5 0 0 1 5.6 30.0Z" fill="#6a1220" stroke="#6a1220" stroke-width="1.4" stroke-linejoin="round"/><path d="M-0.4 3.7L3.7 30.3A30.5 30.5 0 0 1 -10.8 28.5Z" fill="#88202e" stroke="#88202e" stroke-width="1.4" stroke-linejoin="round"/><path d="M-2.1 2.4L-12.6 27.8A30.5 30.5 0 0 1 -26.3 15.5Z" fill="#701422" stroke="#701422" stroke-width="1.4" stroke-linejoin="round"/><path d="M-4.1 1.1L-27.2 13.8A30.5 30.5 0 0 1 -30.4 1.8Z" fill="#7a1626" stroke="#7a1626" stroke-width="1.4" stroke-linejoin="round"/><path d="M-3.4 -0.9L-30.5 -0.2A30.5 30.5 0 0 1 -26.5 -15.1Z" fill="#6a1220" stroke="#6a1220" stroke-width="1.4" stroke-linejoin="round"/><path d="M-2.1 -2.5L-25.5 -16.8A30.5 30.5 0 0 1 -12.8 -27.7Z" fill="#88202e" stroke="#88202e" stroke-width="1.4" stroke-linejoin="round"/><path d="M-0.4 -3.4L-11.0 -28.5A30.5 30.5 0 0 1 4.6 -30.1Z" fill="#701422" stroke="#701422" stroke-width="1.4" stroke-linejoin="round"/><path d="M1.7 -3.8L6.6 -29.8A30.5 30.5 0 0 1 18.0 -24.6Z" fill="#7a1626" stroke="#7a1626" stroke-width="1.4" stroke-linejoin="round"/><path d="M2.7 -1.8L19.6 -23.4A30.5 30.5 0 0 1 29.2 -8.8Z" fill="#6a1220" stroke="#6a1220" stroke-width="1.4" stroke-linejoin="round"/><path d="M3.4 0.1L29.7 -6.9A30.5 30.5 0 0 1 29.1 9.2Z" fill="#88202e" stroke="#88202e" stroke-width="1.4" stroke-linejoin="round"/><path d="M11.4 4.1L25.1 8.9M12.7 6.4L25.7 12.9M6.9 4.3L22.3 14.0M10.1 7.9L20.8 16.3M9.9 10.3L19.4 20.2M6.3 8.3L16.9 22.2M4.9 8.2L14.8 24.7M5.0 10.8L10.3 22.4M3.4 11.0L8.4 26.7M2.2 11.6L5.1 26.6M0.9 9.6L2.5 28.3M-0.3 8.1L-1.0 23.6M-1.2 8.3L-3.6 25.9M-2.4 9.4L-6.9 27.4M-5.4 14.0L-8.9 22.9M-5.8 11.2L-13.0 25.1M-5.2 7.7L-14.4 21.4M-10.0 11.6L-18.0 20.8M-10.6 9.6L-19.4 17.4M-11.5 8.4L-22.5 16.5M-8.0 4.6L-24.3 13.9M-9.0 3.9L-22.9 10.0M-12.3 3.6L-28.1 8.1M-11.4 2.0L-28.5 4.9M-12.4 0.9L-29.5 2.2M-9.0 -0.4L-24.1 -1.2M-13.4 -2.0L-25.7 -3.9M-13.7 -4.2L-22.5 -6.9M-9.1 -3.7L-23.2 -9.5M-8.6 -4.6L-22.5 -12.1M-9.7 -7.0L-24.0 -17.3M-6.6 -5.9L-21.7 -19.2M-8.0 -9.0L-16.8 -18.9M-8.4 -12.6L-14.9 -22.5M-5.2 -9.4L-13.4 -24.3M-3.6 -9.3L-9.4 -24.1M-3.0 -10.5L-7.8 -27.5M-1.7 -11.3L-3.7 -24.2M-0.3 -11.0L-0.6 -25.8M0.9 -10.1L2.2 -23.8M2.7 -13.3L4.8 -23.2M4.4 -14.0L8.0 -25.3M3.6 -8.0L10.3 -23.0M7.7 -12.8L14.2 -23.6M6.8 -8.6L14.9 -18.6M7.4 -7.7L16.4 -17.2M11.4 -9.7L22.1 -18.8M7.0 -4.7L24.6 -16.4M9.0 -4.6L22.1 -11.3M7.5 -2.8L24.6 -9.2M8.2 -1.8L25.8 -5.8M13.8 -1.8L28.8 -3.8M12.0 0.1L24.3 0.3M8.3 1.0L28.0 3.4M14.4 3.2L24.6 5.4" stroke="#b83a4a" stroke-width="0.9" fill="none" opacity="0.45" stroke-dasharray="2.5 1.8"/><path d="M12.1 5.3L21.5 9.4M11.1 6.3L20.0 11.3M10.9 8.0L21.5 15.7M10.5 9.5L17.2 15.6M7.3 8.5L17.8 20.6M6.7 9.5L12.8 18.3M6.4 12.0L11.1 20.6M6.2 15.1L9.0 22.2M3.3 12.0L7.3 26.6M2.2 16.3L3.4 25.4M0.5 13.3L0.8 22.2M-1.5 15.8L-2.6 28.0M-3.0 14.1L-5.8 26.7M-4.1 13.1L-6.9 21.9M-5.8 12.0L-9.9 20.8M-7.6 12.0L-12.4 19.7M-8.9 11.2L-16.2 20.5M-8.4 8.4L-16.8 16.8M-8.5 6.9L-20.7 16.8M-9.2 5.9L-19.1 12.3M-12.3 6.3L-25.1 12.7M-15.1 5.2L-24.3 8.4M-11.7 2.6L-23.8 5.2M-11.3 1.1L-26.0 2.6M-9.8 -0.0L-25.7 -0.1M-16.2 -2.1L-24.5 -3.1M-9.4 -2.3L-27.2 -6.8M-14.7 -5.4L-23.4 -8.5M-14.2 -7.0L-20.9 -10.4M-12.9 -8.1L-23.6 -14.8M-10.6 -8.5L-19.8 -15.8M-11.2 -11.3L-16.7 -16.9M-7.6 -10.0L-13.7 -18.2M-5.3 -9.1L-11.3 -19.5M-5.2 -10.9L-9.5 -19.9M-5.4 -15.8L-7.6 -22.3M-2.1 -10.8L-4.2 -21.5M-1.1 -10.3L-3.0 -28.2M0.3 -11.3L0.6 -22.2M1.8 -11.7L3.4 -22.8M3.8 -14.4L6.1 -23.4M4.0 -10.1L9.4 -23.9M7.5 -14.8L12.7 -25.2M7.4 -10.8L13.9 -20.2M9.2 -10.4L17.7 -20.0M9.2 -8.5L19.7 -18.2M9.6 -7.2L18.8 -14.0M13.9 -8.1L20.7 -12.0M9.0 -3.7L26.1 -10.7M14.5 -4.3L21.6 -6.4M15.5 -2.6L23.5 -4.0M12.3 -0.9L27.0 -2.0M9.8 0.7L24.0 1.6M11.4 2.2L22.0 4.2M15.0 4.7L23.8 7.4" stroke="#1e060c" stroke-width="0.9" fill="none" opacity="0.35" stroke-dasharray="3 2.2"/><polygon points="5.2,1.6 1.8,1.2 3.7,4.3 0.7,1.6 0.7,5.4 -0.4,2.3 -2.4,5.0 -1.3,1.5 -4.1,2.5 -2.3,0.6 -6.0,-0.1 -2.1,-0.7 -4.2,-2.8 -1.5,-1.8 -2.3,-5.3 -0.3,-2.0 0.7,-4.2 0.9,-1.9 2.8,-3.2 1.6,-1.0 4.9,-1.4 2.0,0.0" fill="#e4d8d4"/></g><ellipse cx="238.3" cy="501.1" rx="54" ry="50.5" fill="#3c3c50" opacity="0.2"/><g transform="translate(236.8 498.6) rotate(0) scale(1 0.9340)"><circle r="53" fill="#f5a826"/><circle r="51.14" fill="#f9cb70"/><circle r="49.55" fill="#fce8b4"/><g transform="translate(0 0)"><circle r="45.05" fill="#fad078"/><path d="M4.4 4.5L37.8 21.5A43.5 43.5 0 0 1 20.5 38.3Z" fill="url(#orF)" stroke="url(#orF)" stroke-width="3.1799999999999997" stroke-linejoin="round"/><path d="M0.8 6.3L16.8 40.1A43.5 43.5 0 0 1 -6.8 42.9Z" fill="url(#orF)" stroke="url(#orF)" stroke-width="3.1799999999999997" stroke-linejoin="round"/><path d="M-3.5 6.8L-10.7 42.1A43.5 43.5 0 0 1 -27.6 33.5Z" fill="url(#orF)" stroke="url(#orF)" stroke-width="3.1799999999999997" stroke-linejoin="round"/><path d="M-5.1 2.6L-30.6 30.8A43.5 43.5 0 0 1 -42.9 6.8Z" fill="url(#orF)" stroke="url(#orF)" stroke-width="3.1799999999999997" stroke-linejoin="round"/><path d="M-7.6 -1.2L-43.4 2.8A43.5 43.5 0 0 1 -40.4 -16.0Z" fill="url(#orF)" stroke="url(#orF)" stroke-width="3.1799999999999997" stroke-linejoin="round"/><path d="M-4.8 -4.4L-38.8 -19.7A43.5 43.5 0 0 1 -23.1 -36.8Z" fill="url(#orF)" stroke="url(#orF)" stroke-width="3.1799999999999997" stroke-linejoin="round"/><path d="M-1.0 -5.9L-19.6 -38.8A43.5 43.5 0 0 1 5.6 -43.1Z" fill="url(#orF)" stroke="url(#orF)" stroke-width="3.1799999999999997" stroke-linejoin="round"/><path d="M3.0 -5.4L9.5 -42.4A43.5 43.5 0 0 1 30.9 -30.6Z" fill="url(#orF)" stroke="url(#orF)" stroke-width="3.1799999999999997" stroke-linejoin="round"/><path d="M6.6 -3.2L33.6 -27.6A43.5 43.5 0 0 1 42.4 -9.6Z" fill="url(#orF)" stroke="url(#orF)" stroke-width="3.1799999999999997" stroke-linejoin="round"/><path d="M6.2 0.9L43.1 -5.7A43.5 43.5 0 0 1 39.6 17.9Z" fill="url(#orF)" stroke="url(#orF)" stroke-width="3.1799999999999997" stroke-linejoin="round"/><path d="M13.8 7.9L36.4 20.8M12.4 10.0L32.7 26.2M10.7 11.8L28.1 31.0M8.7 13.3L22.9 35.1M6.5 14.5L17.2 38.2M4.2 15.3L11.0 40.4M1.7 15.8L4.5 41.7M-0.8 15.9L-2.0 41.8M-3.2 15.6L-8.6 41.0M-5.6 14.9L-14.9 39.2M-7.9 13.8L-20.8 36.4M-10.0 12.4L-26.2 32.7M-11.8 10.7L-31.0 28.1M-13.3 8.7L-35.1 22.9M-14.5 6.5L-38.2 17.2M-15.3 4.2L-40.4 11.0M-15.8 1.7L-41.7 4.5M-15.9 -0.8L-41.8 -2.0M-15.6 -3.2L-41.0 -8.6M-14.9 -5.6L-39.2 -14.9M-13.8 -7.9L-36.4 -20.8M-12.4 -10.0L-32.7 -26.2M-10.7 -11.8L-28.1 -31.0M-8.7 -13.3L-22.9 -35.1M-6.5 -14.5L-17.2 -38.2M-4.2 -15.3L-11.0 -40.4M-1.7 -15.8L-4.5 -41.7M0.8 -15.9L2.0 -41.8M3.2 -15.6L8.6 -41.0M5.6 -14.9L14.9 -39.2M7.9 -13.8L20.8 -36.4M10.0 -12.4L26.2 -32.7M11.8 -10.7L31.0 -28.1M13.3 -8.7L35.1 -22.9M14.5 -6.5L38.2 -17.2M15.3 -4.2L40.4 -11.0M15.8 -1.7L41.7 -4.5M15.9 0.8L41.8 2.0M15.6 3.2L41.0 8.6M14.9 5.6L39.2 14.9" stroke="#f8c458" stroke-width="0.8" fill="none" opacity="0.4"/><circle r="8.11" fill="#fbd98e" opacity="0.6"/><polygon points="8.8,4.3 3.0,2.9 4.0,7.5 0.7,3.9 -1.4,10.1 -1.4,2.9 -5.5,5.8 -3.7,2.0 -9.0,1.6 -3.7,-0.5 -8.8,-4.3 -2.7,-2.6 -3.8,-7.1 -0.6,-3.6 1.3,-9.6 1.7,-3.6 6.2,-6.5 2.8,-1.5 10.2,-1.8 3.3,0.4" fill="#f3eee2"/></g></g><linearGradient id="lg194" x1="0.33" y1="0.03" x2="0.67" y2="0.97"><stop offset="0" stop-color="#4f8e30"/><stop offset="1" stop-color="#245c1c"/></linearGradient><path d="M182.5 451.3C186 447 190 443.5 195 440C202 434 210 430 220 428.8C232 427.5 244 432 252 438C256 441 258 443 258.8 445C254 449 244 454 232.5 456.3C224 457.5 215 455.5 207.5 452.5C202 450 198 447 195.5 445.5C191 447.5 187 450 184 452.5Z" fill="#6a7288" opacity="0.22" transform="translate(1.5 2.5)"/><path d="M182.5 451.3C186 447 190 443.5 195 440C202 434 210 430 220 428.8C232 427.5 244 432 252 438C256 441 258 443 258.8 445C254 449 244 454 232.5 456.3C224 457.5 215 455.5 207.5 452.5C202 450 198 447 195.5 445.5C191 447.5 187 450 184 452.5Z" fill="url(#lg194)"/><path d="M196 445C215 440 238 441 257 445" fill="none" stroke="#9ccc6c" stroke-width="0.8" opacity="0.7"/><path d="M300.0 425.0C309.9 424.8 322.0 433.2 328.0 440.0C334.0 446.8 335.1 457.7 335.8 466.0C336.6 474.3 335.1 483.5 332.5 490.0C329.9 496.5 324.8 501.4 320.0 505.0C315.2 508.6 309.5 511.0 303.8 511.3C298.1 511.6 291.8 510.4 286.0 507.0C280.2 503.6 273.0 497.8 269.0 491.0C265.0 484.2 261.9 474.3 261.8 466.0C261.7 457.7 262.1 447.8 268.5 441.0C274.9 434.2 290.1 425.2 300.0 425.0Z" fill="#3c3c50" opacity="0.2" transform="translate(1.5 2.5)"/><ellipse cx="304" cy="510" rx="2.2" ry="2.4" fill="#d8a818"/><path d="M300.0 425.0C309.9 424.8 322.0 433.2 328.0 440.0C334.0 446.8 335.1 457.7 335.8 466.0C336.6 474.3 335.1 483.5 332.5 490.0C329.9 496.5 324.8 501.4 320.0 505.0C315.2 508.6 309.5 511.0 303.8 511.3C298.1 511.6 291.8 510.4 286.0 507.0C280.2 503.6 273.0 497.8 269.0 491.0C265.0 484.2 261.9 474.3 261.8 466.0C261.7 457.7 262.1 447.8 268.5 441.0C274.9 434.2 290.1 425.2 300.0 425.0Z" fill="url(#lemG)"/><linearGradient id="lg201" x1="0.00" y1="0.50" x2="1.00" y2="0.50"><stop offset="0" stop-color="#68a840"/><stop offset="1" stop-color="#468828"/></linearGradient><path d="M387.5 322.5C393 326 398 333 402 342C405 349 405.5 356 404 363C401 371 396 377 391.3 380.5C388 377 385 371 383.8 365C382.5 357 381.8 349 382 340C382.5 333 384.5 326.5 387.5 322.5Z" fill="#6a7288" opacity="0.22" transform="translate(1.5 2.5)"/><path d="M387.5 322.5C393 326 398 333 402 342C405 349 405.5 356 404 363C401 371 396 377 391.3 380.5C388 377 385 371 383.8 365C382.5 357 381.8 349 382 340C382.5 333 384.5 326.5 387.5 322.5Z" fill="url(#lg201)"/><path d="M388 324C390 345 391 365 391.3 380" fill="none" stroke="#9ccc6c" stroke-width="0.8" opacity="0.7"/><linearGradient id="lg205" x1="0.15" y1="0.15" x2="0.85" y2="0.85"><stop offset="0" stop-color="#5a9e38"/><stop offset="1" stop-color="#357a24"/></linearGradient><path d="M423.5 497C424.5 494 426 491.5 428 489C423.5 483 422 474 425 466C429 456 438 449 449 445C459 441.5 469 440 477 441C481 444 480.5 451 478 458C474 469 466 480 456 487C447 493 437 495 430 492C428 493.5 426 495.5 424.5 497.5Z" fill="#6a7288" opacity="0.22" transform="translate(1.5 2.5)"/><path d="M423.5 497C424.5 494 426 491.5 428 489C423.5 483 422 474 425 466C429 456 438 449 449 445C459 441.5 469 440 477 441C481 444 480.5 451 478 458C474 469 466 480 456 487C447 493 437 495 430 492C428 493.5 426 495.5 424.5 497.5Z" fill="url(#lg205)"/><path d="M428 490C445 475 462 458 478 443" fill="none" stroke="#9ccc6c" stroke-width="0.8" opacity="0.7"/><g transform="rotate(-15 409.3 103.3)"><ellipse cx="410.1" cy="104.5" rx="6.450000000000001" ry="5.020000000000001" fill="#3c3c50" opacity="0.2"/><ellipse cx="409.3" cy="103.3" rx="6.050000000000001" ry="4.620000000000001" fill="url(#seedG)"/><ellipse cx="407.8" cy="101.9" rx="2.1" ry="1.4" fill="#e0606c" opacity="0.7"/></g><g transform="rotate(-35 401.3 112.5)"><ellipse cx="402.1" cy="113.7" rx="6.450000000000001" ry="5.020000000000001" fill="#3c3c50" opacity="0.2"/><ellipse cx="401.3" cy="112.5" rx="6.050000000000001" ry="4.620000000000001" fill="url(#seedG)"/><ellipse cx="399.8" cy="111.1" rx="2.1" ry="1.4" fill="#e0606c" opacity="0.7"/></g><g transform="rotate(10 391.3 118.3)"><ellipse cx="392.1" cy="119.5" rx="5.020000000000001" ry="6.450000000000001" fill="#3c3c50" opacity="0.2"/><ellipse cx="391.3" cy="118.3" rx="4.620000000000001" ry="6.050000000000001" fill="url(#seedG)"/><ellipse cx="390.1" cy="116.5" rx="1.6" ry="1.8" fill="#e0606c" opacity="0.7"/></g><g transform="rotate(-20 458 126.5)"><ellipse cx="458.8" cy="127.7" rx="5.46" ry="3.9200000000000004" fill="#3c3c50" opacity="0.2"/><ellipse cx="458" cy="126.5" rx="5.06" ry="3.5200000000000005" fill="url(#seedG)"/><ellipse cx="456.7" cy="125.4" rx="1.8" ry="1.1" fill="#e0606c" opacity="0.7"/></g><g transform="rotate(20 374.3 145)"><ellipse cx="375.1" cy="146.2" rx="5.46" ry="5.9" fill="#3c3c50" opacity="0.2"/><ellipse cx="374.3" cy="145" rx="5.06" ry="5.5" fill="url(#seedG)"/><ellipse cx="373.0" cy="143.3" rx="1.8" ry="1.6" fill="#e0606c" opacity="0.7"/></g><g transform="rotate(0 362.5 161.3)"><ellipse cx="363.3" cy="162.5" rx="4.36" ry="6.340000000000002" fill="#3c3c50" opacity="0.2"/><ellipse cx="362.5" cy="161.3" rx="3.9600000000000004" ry="5.940000000000001" fill="url(#seedG)"/><ellipse cx="361.5" cy="159.5" rx="1.4" ry="1.8" fill="#e0606c" opacity="0.7"/></g><g transform="rotate(-10 401.3 214.5)"><ellipse cx="402.1" cy="215.7" rx="5.240000000000001" ry="6.120000000000001" fill="#3c3c50" opacity="0.2"/><ellipse cx="401.3" cy="214.5" rx="4.840000000000001" ry="5.720000000000001" fill="url(#seedG)"/><ellipse cx="400.1" cy="212.8" rx="1.7" ry="1.7" fill="#e0606c" opacity="0.7"/></g><g transform="rotate(0 526.8 220.5)"><ellipse cx="527.5999999999999" cy="221.7" rx="4.800000000000001" ry="6.120000000000001" fill="#3c3c50" opacity="0.2"/><ellipse cx="526.8" cy="220.5" rx="4.4" ry="5.720000000000001" fill="url(#seedG)"/><ellipse cx="525.7" cy="218.8" rx="1.5" ry="1.7" fill="#e0606c" opacity="0.7"/></g><g transform="rotate(0 546.3 222)"><ellipse cx="547.0999999999999" cy="223.2" rx="5.46" ry="5.46" fill="#3c3c50" opacity="0.2"/><ellipse cx="546.3" cy="222" rx="5.06" ry="5.06" fill="url(#seedG)"/><ellipse cx="545.0" cy="220.5" rx="1.8" ry="1.5" fill="#e0606c" opacity="0.7"/></g><g transform="rotate(-30 325 222.5)"><ellipse cx="325.8" cy="223.7" rx="6.78" ry="5.9" fill="#3c3c50" opacity="0.2"/><ellipse cx="325" cy="222.5" rx="6.38" ry="5.5" fill="url(#seedG)"/><ellipse cx="323.4" cy="220.8" rx="2.2" ry="1.6" fill="#e0606c" opacity="0.7"/></g><g transform="rotate(0 342 215.5)"><ellipse cx="342.8" cy="216.7" rx="3.7" ry="2.8200000000000003" fill="#3c3c50" opacity="0.2"/><ellipse cx="342" cy="215.5" rx="3.3000000000000003" ry="2.4200000000000004" fill="url(#seedG)"/><ellipse cx="341.2" cy="214.8" rx="1.2" ry="0.7" fill="#e0606c" opacity="0.7"/></g><g transform="rotate(-40 293.3 240.8)"><ellipse cx="294.1" cy="242.0" rx="6.5600000000000005" ry="5.46" fill="#3c3c50" opacity="0.2"/><ellipse cx="293.3" cy="240.8" rx="6.16" ry="5.06" fill="url(#seedG)"/><ellipse cx="291.8" cy="239.3" rx="2.2" ry="1.5" fill="#e0606c" opacity="0.7"/></g><g transform="rotate(10 302.5 252)"><ellipse cx="303.3" cy="253.2" rx="7.000000000000001" ry="5.240000000000001" fill="#3c3c50" opacity="0.2"/><ellipse cx="302.5" cy="252" rx="6.6000000000000005" ry="4.840000000000001" fill="url(#seedG)"/><ellipse cx="300.9" cy="250.5" rx="2.3" ry="1.5" fill="#e0606c" opacity="0.7"/></g><g transform="rotate(0 292.8 252.5)"><ellipse cx="293.6" cy="253.7" rx="3.9200000000000004" ry="5.240000000000001" fill="#3c3c50" opacity="0.2"/><ellipse cx="292.8" cy="252.5" rx="3.5200000000000005" ry="4.840000000000001" fill="url(#seedG)"/><ellipse cx="291.9" cy="251.0" rx="1.2" ry="1.5" fill="#e0606c" opacity="0.7"/></g><g transform="rotate(10 294.3 260)"><ellipse cx="295.1" cy="261.2" rx="5.9" ry="4.36" fill="#3c3c50" opacity="0.2"/><ellipse cx="294.3" cy="260" rx="5.5" ry="3.9600000000000004" fill="url(#seedG)"/><ellipse cx="292.9" cy="258.8" rx="1.9" ry="1.2" fill="#e0606c" opacity="0.7"/></g><g transform="rotate(20 297.5 268.3)"><ellipse cx="298.3" cy="269.5" rx="6.340000000000002" ry="5.46" fill="#3c3c50" opacity="0.2"/><ellipse cx="297.5" cy="268.3" rx="5.940000000000001" ry="5.06" fill="url(#seedG)"/><ellipse cx="296.0" cy="266.8" rx="2.1" ry="1.5" fill="#e0606c" opacity="0.7"/></g><g transform="rotate(10 280 267)"><ellipse cx="280.8" cy="268.2" rx="6.5600000000000005" ry="5.46" fill="#3c3c50" opacity="0.2"/><ellipse cx="280" cy="267" rx="6.16" ry="5.06" fill="url(#seedG)"/><ellipse cx="278.5" cy="265.5" rx="2.2" ry="1.5" fill="#e0606c" opacity="0.7"/></g><g transform="rotate(30 220.8 327.5)"><ellipse cx="221.60000000000002" cy="328.7" rx="6.340000000000002" ry="5.46" fill="#3c3c50" opacity="0.2"/><ellipse cx="220.8" cy="327.5" rx="5.940000000000001" ry="5.06" fill="url(#seedG)"/><ellipse cx="219.3" cy="326.0" rx="2.1" ry="1.5" fill="#e0606c" opacity="0.7"/></g><g transform="rotate(10 372.5 335.2)"><ellipse cx="373.3" cy="336.4" rx="6.78" ry="4.800000000000001" fill="#3c3c50" opacity="0.2"/><ellipse cx="372.5" cy="335.2" rx="6.38" ry="4.4" fill="url(#seedG)"/><ellipse cx="370.9" cy="333.9" rx="2.2" ry="1.3" fill="#e0606c" opacity="0.7"/></g><g transform="rotate(-20 290 356.3)"><ellipse cx="290.8" cy="357.5" rx="5.240000000000001" ry="4.140000000000001" fill="#3c3c50" opacity="0.2"/><ellipse cx="290" cy="356.3" rx="4.840000000000001" ry="3.74" fill="url(#seedG)"/><ellipse cx="288.8" cy="355.2" rx="1.7" ry="1.1" fill="#e0606c" opacity="0.7"/></g><g transform="rotate(0 413.5 281.3)"><ellipse cx="414.3" cy="282.5" rx="4.140000000000001" ry="3.9200000000000004" fill="#3c3c50" opacity="0.2"/><ellipse cx="413.5" cy="281.3" rx="3.74" ry="3.5200000000000005" fill="url(#seedG)"/><ellipse cx="412.6" cy="280.2" rx="1.3" ry="1.1" fill="#e0606c" opacity="0.7"/></g><g transform="rotate(-45 501.8 237.5)"><ellipse cx="502.6" cy="238.7" rx="7.2200000000000015" ry="4.58" fill="#3c3c50" opacity="0.2"/><ellipse cx="501.8" cy="237.5" rx="6.820000000000001" ry="4.18" fill="url(#seedG)"/><ellipse cx="500.1" cy="236.2" rx="2.4" ry="1.3" fill="#e0606c" opacity="0.7"/></g><g transform="rotate(5 417 281.8)"><ellipse cx="417.8" cy="283.0" rx="6.5600000000000005" ry="4.800000000000001" fill="#3c3c50" opacity="0.2"/><ellipse cx="417" cy="281.8" rx="6.16" ry="4.4" fill="url(#seedG)"/><ellipse cx="415.5" cy="280.5" rx="2.2" ry="1.3" fill="#e0606c" opacity="0.7"/></g><g transform="rotate(-10 444.3 287)"><ellipse cx="445.1" cy="288.2" rx="5.46" ry="6.5600000000000005" fill="#3c3c50" opacity="0.2"/><ellipse cx="444.3" cy="287" rx="5.06" ry="6.16" fill="url(#seedG)"/><ellipse cx="443.0" cy="285.2" rx="1.8" ry="1.8" fill="#e0606c" opacity="0.7"/></g><g transform="rotate(-25 545 342.5)"><ellipse cx="545.8" cy="343.7" rx="7.440000000000001" ry="5.240000000000001" fill="#3c3c50" opacity="0.2"/><ellipse cx="545" cy="342.5" rx="7.040000000000001" ry="4.840000000000001" fill="url(#seedG)"/><ellipse cx="543.2" cy="341.0" rx="2.5" ry="1.5" fill="#e0606c" opacity="0.7"/></g><g transform="rotate(25 565 348.3)"><ellipse cx="565.8" cy="349.5" rx="6.5600000000000005" ry="5.680000000000001" fill="#3c3c50" opacity="0.2"/><ellipse cx="565" cy="348.3" rx="6.16" ry="5.28" fill="url(#seedG)"/><ellipse cx="563.5" cy="346.7" rx="2.2" ry="1.6" fill="#e0606c" opacity="0.7"/></g><g transform="rotate(-20 547 354.3)"><ellipse cx="547.8" cy="355.5" rx="5.46" ry="7.000000000000001" fill="#3c3c50" opacity="0.2"/><ellipse cx="547" cy="354.3" rx="5.06" ry="6.6000000000000005" fill="url(#seedG)"/><ellipse cx="545.7" cy="352.3" rx="1.8" ry="2.0" fill="#e0606c" opacity="0.7"/></g><g transform="rotate(0 556 368.5)"><ellipse cx="556.8" cy="369.7" rx="5.020000000000001" ry="3.48" fill="#3c3c50" opacity="0.2"/><ellipse cx="556" cy="368.5" rx="4.620000000000001" ry="3.08" fill="url(#seedG)"/><ellipse cx="554.8" cy="367.6" rx="1.6" ry="0.9" fill="#e0606c" opacity="0.7"/></g><g transform="rotate(10 199.3 408)"><ellipse cx="200.10000000000002" cy="409.2" rx="5.9" ry="5.240000000000001" fill="#3c3c50" opacity="0.2"/><ellipse cx="199.3" cy="408" rx="5.5" ry="4.840000000000001" fill="url(#seedG)"/><ellipse cx="197.9" cy="406.5" rx="1.9" ry="1.5" fill="#e0606c" opacity="0.7"/></g><g transform="rotate(10 213.3 413)"><ellipse cx="214.10000000000002" cy="414.2" rx="5.46" ry="6.5600000000000005" fill="#3c3c50" opacity="0.2"/><ellipse cx="213.3" cy="413" rx="5.06" ry="6.16" fill="url(#seedG)"/><ellipse cx="212.0" cy="411.2" rx="1.8" ry="1.8" fill="#e0606c" opacity="0.7"/></g><g transform="rotate(0 411.8 458.8)"><ellipse cx="412.6" cy="460.0" rx="4.36" ry="5.46" fill="#3c3c50" opacity="0.2"/><ellipse cx="411.8" cy="458.8" rx="3.9600000000000004" ry="5.06" fill="url(#seedG)"/><ellipse cx="410.8" cy="457.3" rx="1.4" ry="1.5" fill="#e0606c" opacity="0.7"/></g><g transform="rotate(0 412.5 474.3)"><ellipse cx="413.3" cy="475.5" rx="4.36" ry="5.9" fill="#3c3c50" opacity="0.2"/><ellipse cx="412.5" cy="474.3" rx="3.9600000000000004" ry="5.5" fill="url(#seedG)"/><ellipse cx="411.5" cy="472.7" rx="1.4" ry="1.6" fill="#e0606c" opacity="0.7"/></g><g transform="rotate(-30 555.8 372.5)"><ellipse cx="556.5999999999999" cy="373.7" rx="6.5600000000000005" ry="6.120000000000001" fill="#3c3c50" opacity="0.2"/><ellipse cx="555.8" cy="372.5" rx="6.16" ry="5.720000000000001" fill="url(#seedG)"/><ellipse cx="554.3" cy="370.8" rx="2.2" ry="1.7" fill="#e0606c" opacity="0.7"/></g><g transform="rotate(-10 551.3 390)"><ellipse cx="552.0999999999999" cy="391.2" rx="6.5600000000000005" ry="4.800000000000001" fill="#3c3c50" opacity="0.2"/><ellipse cx="551.3" cy="390" rx="6.16" ry="4.4" fill="url(#seedG)"/><ellipse cx="549.8" cy="388.7" rx="2.2" ry="1.3" fill="#e0606c" opacity="0.7"/></g><g transform="rotate(10 540.5 398.3)"><ellipse cx="541.3" cy="399.5" rx="6.120000000000001" ry="4.800000000000001" fill="#3c3c50" opacity="0.2"/><ellipse cx="540.5" cy="398.3" rx="5.720000000000001" ry="4.4" fill="url(#seedG)"/><ellipse cx="539.1" cy="397.0" rx="2.0" ry="1.3" fill="#e0606c" opacity="0.7"/></g><g transform="rotate(20 557.5 416.3)"><ellipse cx="558.3" cy="417.5" rx="6.5600000000000005" ry="5.680000000000001" fill="#3c3c50" opacity="0.2"/><ellipse cx="557.5" cy="416.3" rx="6.16" ry="5.28" fill="url(#seedG)"/><ellipse cx="556.0" cy="414.7" rx="2.2" ry="1.6" fill="#e0606c" opacity="0.7"/></g><g transform="rotate(15 554.5 424.5)"><ellipse cx="555.3" cy="425.7" rx="6.340000000000002" ry="4.800000000000001" fill="#3c3c50" opacity="0.2"/><ellipse cx="554.5" cy="424.5" rx="5.940000000000001" ry="4.4" fill="url(#seedG)"/><ellipse cx="553.0" cy="423.2" rx="2.1" ry="1.3" fill="#e0606c" opacity="0.7"/></g><g transform="rotate(-20 549.3 431.8)"><ellipse cx="550.0999999999999" cy="433.0" rx="5.680000000000001" ry="7.000000000000001" fill="#3c3c50" opacity="0.2"/><ellipse cx="549.3" cy="431.8" rx="5.28" ry="6.6000000000000005" fill="url(#seedG)"/><ellipse cx="548.0" cy="429.8" rx="1.8" ry="2.0" fill="#e0606c" opacity="0.7"/></g><g transform="rotate(5 523.8 434.3)"><ellipse cx="524.5999999999999" cy="435.5" rx="7.66" ry="5.46" fill="#3c3c50" opacity="0.2"/><ellipse cx="523.8" cy="434.3" rx="7.26" ry="5.06" fill="url(#seedG)"/><ellipse cx="522.0" cy="432.8" rx="2.5" ry="1.5" fill="#e0606c" opacity="0.7"/></g><g transform="rotate(10 551.3 442)"><ellipse cx="552.0999999999999" cy="443.2" rx="6.340000000000002" ry="5.020000000000001" fill="#3c3c50" opacity="0.2"/><ellipse cx="551.3" cy="442" rx="5.940000000000001" ry="4.620000000000001" fill="url(#seedG)"/><ellipse cx="549.8" cy="440.6" rx="2.1" ry="1.4" fill="#e0606c" opacity="0.7"/></g><g transform="rotate(-5 518 454.5)"><ellipse cx="518.8" cy="455.7" rx="4.58" ry="7.2200000000000015" fill="#3c3c50" opacity="0.2"/><ellipse cx="518" cy="454.5" rx="4.18" ry="6.820000000000001" fill="url(#seedG)"/><ellipse cx="517.0" cy="452.5" rx="1.5" ry="2.0" fill="#e0606c" opacity="0.7"/></g><g transform="rotate(0 548 455.5)"><ellipse cx="548.8" cy="456.7" rx="5.46" ry="7.000000000000001" fill="#3c3c50" opacity="0.2"/><ellipse cx="548" cy="455.5" rx="5.06" ry="6.6000000000000005" fill="url(#seedG)"/><ellipse cx="546.7" cy="453.5" rx="1.8" ry="2.0" fill="#e0606c" opacity="0.7"/></g><g transform="rotate(25 559.5 460.8)"><ellipse cx="560.3" cy="462.0" rx="5.46" ry="3.48" fill="#3c3c50" opacity="0.2"/><ellipse cx="559.5" cy="460.8" rx="5.06" ry="3.08" fill="url(#seedG)"/><ellipse cx="558.2" cy="459.9" rx="1.8" ry="0.9" fill="#e0606c" opacity="0.7"/></g><g transform="rotate(10 502 465.8)"><ellipse cx="502.8" cy="467.0" rx="7.440000000000001" ry="4.58" fill="#3c3c50" opacity="0.2"/><ellipse cx="502" cy="465.8" rx="7.040000000000001" ry="4.18" fill="url(#seedG)"/><ellipse cx="500.2" cy="464.5" rx="2.5" ry="1.3" fill="#e0606c" opacity="0.7"/></g><g transform="rotate(-5 528.8 471.8)"><ellipse cx="529.5999999999999" cy="473.0" rx="7.2200000000000015" ry="4.800000000000001" fill="#3c3c50" opacity="0.2"/><ellipse cx="528.8" cy="471.8" rx="6.820000000000001" ry="4.4" fill="url(#seedG)"/><ellipse cx="527.1" cy="470.5" rx="2.4" ry="1.3" fill="#e0606c" opacity="0.7"/></g><g transform="rotate(15 412.5 455.5)"><ellipse cx="413.3" cy="456.7" rx="6.450000000000001" ry="3.7" fill="#3c3c50" opacity="0.2"/><ellipse cx="412.5" cy="455.5" rx="6.050000000000001" ry="3.3000000000000003" fill="url(#seedG)"/><ellipse cx="411.0" cy="454.5" rx="2.1" ry="1.0" fill="#e0606c" opacity="0.7"/></g><g transform="rotate(20 415.5 462.5)"><ellipse cx="416.3" cy="463.7" rx="6.5600000000000005" ry="5.46" fill="#3c3c50" opacity="0.2"/><ellipse cx="415.5" cy="462.5" rx="6.16" ry="5.06" fill="url(#seedG)"/><ellipse cx="414.0" cy="461.0" rx="2.2" ry="1.5" fill="#e0606c" opacity="0.7"/></g><g transform="rotate(30 415 475)"><ellipse cx="415.8" cy="476.2" rx="6.78" ry="5.9" fill="#3c3c50" opacity="0.2"/><ellipse cx="415" cy="475" rx="6.38" ry="5.5" fill="url(#seedG)"/><ellipse cx="413.4" cy="473.4" rx="2.2" ry="1.6" fill="#e0606c" opacity="0.7"/></g><g transform="rotate(10 441.8 498.8)"><ellipse cx="442.6" cy="500.0" rx="5.9" ry="4.140000000000001" fill="#3c3c50" opacity="0.2"/><ellipse cx="441.8" cy="498.8" rx="5.5" ry="3.74" fill="url(#seedG)"/><ellipse cx="440.4" cy="497.7" rx="1.9" ry="1.1" fill="#e0606c" opacity="0.7"/></g><g transform="rotate(10 530.8 457.5)"><ellipse cx="530.8" cy="457.5" rx="2.2" ry="5.06" fill="#d8a0b0"/></g><g transform="rotate(-20 301.8 525)"><ellipse cx="302.6" cy="526.2" rx="6.340000000000002" ry="5.680000000000001" fill="#3c3c50" opacity="0.2"/><ellipse cx="301.8" cy="525" rx="5.940000000000001" ry="5.28" fill="url(#seedG)"/><ellipse cx="300.3" cy="523.4" rx="2.1" ry="1.6" fill="#e0606c" opacity="0.7"/></g><g transform="rotate(-15 343 547)"><ellipse cx="343.8" cy="548.2" rx="5.9" ry="6.78" fill="#3c3c50" opacity="0.2"/><ellipse cx="343" cy="547" rx="5.5" ry="6.38" fill="url(#seedG)"/><ellipse cx="341.6" cy="545.1" rx="1.9" ry="1.9" fill="#e0606c" opacity="0.7"/></g><g transform="rotate(-10 388 530)"><ellipse cx="388.8" cy="531.2" rx="5.020000000000001" ry="6.5600000000000005" fill="#3c3c50" opacity="0.2"/><ellipse cx="388" cy="530" rx="4.620000000000001" ry="6.16" fill="url(#seedG)"/><ellipse cx="386.8" cy="528.2" rx="1.6" ry="1.8" fill="#e0606c" opacity="0.7"/></g><g transform="rotate(-5 306.3 589.5)"><ellipse cx="307.1" cy="590.7" rx="7.000000000000001" ry="4.58" fill="#3c3c50" opacity="0.2"/><ellipse cx="306.3" cy="589.5" rx="6.6000000000000005" ry="4.18" fill="url(#seedG)"/><ellipse cx="304.7" cy="588.2" rx="2.3" ry="1.3" fill="#e0606c" opacity="0.7"/></g></g></svg>
<div style="left:699px;top:49px;width:2px;height:565px;background:#3d3d3d;"></div>
<div style="left:701px;top:49px;width:317px;height:565px;background:#535353;"></div>
<div style="left:701px;top:49px;width:317px;height:9.5px;background:#424242;"></div>
<svg style="left:718px;top:51.3px;" width="7" height="5" viewBox="0 0 7 5"><path d="M2.6 0.5L0.7 2.5L2.6 4.5M5.6 0.5L3.7 2.5L5.6 4.5" stroke="#d8d8d8" stroke-width="1.1" fill="none"/></svg>
<svg style="left:1006.5px;top:51.3px;" width="7" height="5" viewBox="0 0 7 5"><path d="M1 0.5L2.9 2.5L1 4.5M4 0.5L5.9 2.5L4 4.5" stroke="#d8d8d8" stroke-width="1.1" fill="none"/></svg>
<div style="left:730px;top:58.5px;width:2.5px;height:555.5px;background:#3d3d3d;"></div>
<div style="left:701px;top:111.8px;width:29px;height:1px;background:#3d3d3d;"></div>
<div style="left:708.3px;top:62px;width:1px;height:2.8px;background:#474747;"></div>
<div style="left:710.65px;top:62px;width:1px;height:2.8px;background:#474747;"></div>
<div style="left:713.0px;top:62px;width:1px;height:2.8px;background:#474747;"></div>
<div style="left:715.3499999999999px;top:62px;width:1px;height:2.8px;background:#474747;"></div>
<div style="left:717.6999999999999px;top:62px;width:1px;height:2.8px;background:#474747;"></div>
<div style="left:720.05px;top:62px;width:1px;height:2.8px;background:#474747;"></div>
<div style="left:722.4px;top:62px;width:1px;height:2.8px;background:#474747;"></div>
<svg style="left:709.3px;top:69.5px;" width="14" height="15" viewBox="0 0 14 15"><rect x="1.3" y="1.2" width="3.6" height="3.4" fill="none" stroke="#dedede" stroke-width="0.9"/><rect x="1.3" y="5.8" width="3.6" height="3.4" fill="none" stroke="#dedede" stroke-width="0.9"/><rect x="0.9" y="10" width="4.4" height="3.8" fill="#dedede"/><path d="M8.8 12.2C12.6 10 12.6 5 9.6 3.4" fill="none" stroke="#dedede" stroke-width="1.5"/><path d="M7.4 3.8L10.6 1.2L11 5.4Z" fill="#dedede"/></svg>
<svg style="left:710px;top:92.5px;" width="12" height="11" viewBox="0 0 12 11"><path d="M0.5 0.5H11.5V7.5H5L2.5 10.5V7.5H0.5Z" fill="#dedede"/></svg>
<div style="left:732.5px;top:58.5px;width:285.5px;height:22px;background:#424242;"></div>
<div style="left:732.5px;top:58.5px;width:32.5px;height:22px;background:#535353;"></div>
<span style="left:739px;top:61.60px;line-height:14px;font-size:8.6px;color:#f0f0f0;font-weight:bold;letter-spacing:-0.991px;">Color</span>
<span style="left:772px;top:61.60px;line-height:14px;font-size:8.6px;color:#b2b2b2;font-weight:bold;letter-spacing:-0.709px;">Swatches</span>
<div style="left:813px;top:58.5px;width:1px;height:22px;background:#4c4c4c;"></div>
<span style="left:819.5px;top:61.60px;line-height:14px;font-size:8.6px;color:#b2b2b2;font-weight:bold;letter-spacing:-0.516px;">Gradients</span>
<div style="left:861.5px;top:58.5px;width:1px;height:22px;background:#4c4c4c;"></div>
<span style="left:868.5px;top:61.60px;line-height:14px;font-size:8.6px;color:#b2b2b2;font-weight:bold;letter-spacing:-0.426px;">Patterns</span>
<div style="left:906px;top:58.5px;width:1px;height:22px;background:#4c4c4c;"></div>
<div style="left:1005px;top:67.0px;width:8px;height:1.3px;background:#b0b0b0;"></div>
<div style="left:1005px;top:69.5px;width:8px;height:1.3px;background:#b0b0b0;"></div>
<div style="left:1005px;top:72.0px;width:8px;height:1.3px;background:#b0b0b0;"></div>
<div style="left:748px;top:97px;width:14.5px;height:15px;background:#fff;border:0.5px solid #3a3a3a;"></div>
<div style="left:739.5px;top:89.5px;width:15px;height:14.5px;background:#bdc1cf;border:1px solid #e6e6e6;box-shadow:0 0 0 1px #3c3c3c;"></div>
<div style="left:767.5px;top:86.5px;width:209px;height:135px;background:linear-gradient(to bottom,rgba(0,0,0,0) 0%,#000 100%),linear-gradient(to right,#fff 0%,#0033ff 100%);"></div>
<div style="left:776.8px;top:111.6px;width:8px;height:8px;border:1px solid #2a2a2a;border-radius:50%;"></div>
<div style="left:989.5px;top:86.5px;width:15.5px;height:135px;background:linear-gradient(to bottom,#ff0000 0%,#ff00ff 16.6%,#0000ff 33.3%,#00ffff 50%,#00ff00 66.6%,#ffff00 83.3%,#ff0000 100%);"></div>
<svg style="left:982.5px;top:129.5px;" width="5" height="7" viewBox="0 0 5 7"><path d="M0.5 0.8H2L4.6 3.5L2 6.2H0.5Z" fill="#e8e8e8"/></svg>
<div style="left:732.5px;top:238px;width:285.5px;height:3px;background:#3d3d3d;"></div>
<div style="left:732.5px;top:241px;width:285.5px;height:22px;background:#424242;"></div>
<div style="left:732.5px;top:241px;width:51.5px;height:22px;background:#535353;"></div>
<span style="left:739px;top:244.10px;line-height:14px;font-size:8.6px;color:#f0f0f0;font-weight:bold;letter-spacing:-0.404px;">Properties</span>
<span style="left:791px;top:244.10px;line-height:14px;font-size:8.6px;color:#b2b2b2;font-weight:bold;letter-spacing:-0.553px;">Adjustments</span>
<div style="left:843.5px;top:241px;width:1px;height:22px;background:#4c4c4c;"></div>
<span style="left:850.5px;top:244.10px;line-height:14px;font-size:8.6px;color:#b2b2b2;font-weight:bold;letter-spacing:-0.536px;">Libraries</span>
<div style="left:888.5px;top:241px;width:1px;height:22px;background:#4c4c4c;"></div>
<div style="left:1005px;top:249.5px;width:8px;height:1.3px;background:#b0b0b0;"></div>
<div style="left:1005px;top:252.0px;width:8px;height:1.3px;background:#b0b0b0;"></div>
<div style="left:1005px;top:254.5px;width:8px;height:1.3px;background:#b0b0b0;"></div>
<div style="left:740.5px;top:267px;width:18px;height:18px;background:#3a3a3a;border:1px solid #606060;border-radius:2px;"></div>
<svg style="left:745px;top:270.5px;" width="9" height="11" viewBox="0 0 9 11"><path d="M0.6 0.6H5.8L8.4 3.2V10.4H0.6Z" fill="none" stroke="#e0e0e0" stroke-width="1.1"/><path d="M5.6 0.6V3.4H8.4" fill="none" stroke="#e0e0e0" stroke-width="0.9"/></svg>
<span style="left:763px;top:270.30px;line-height:14px;font-size:8.5px;color:#d6d6d6;letter-spacing:-0.405px;">Document</span>
<div style="left:732.5px;top:288.5px;width:272.5px;height:1px;background:#464646;"></div>
<svg style="left:737px;top:297.5px;" width="8" height="5" viewBox="0 0 8 5"><path d="M0.7 0.7L4 4L7.3 0.7" stroke="#bdbdbd" stroke-width="1" fill="none"/></svg>
<span style="left:749.5px;top:293.30px;line-height:14px;font-size:8.8px;color:#ececec;font-weight:bold;letter-spacing:-0.467px;">Canvas</span>
<span style="left:773px;top:313.00px;line-height:14px;font-size:8.2px;color:#d6d6d6;">W</span>
<div style="left:784.8px;top:313.3px;width:41px;height:12.5px;background:#404040;border:1px solid #5e5e5e;"></div>
<span style="left:788.3px;top:312.85px;line-height:14px;font-size:8.2px;color:#e6e6e6;letter-spacing:-0.311px;">3914 px</span>
<span style="left:837.5px;top:313.00px;line-height:14px;font-size:8.2px;color:#cfcfcf;">X</span>
<div style="left:848px;top:313.3px;width:41px;height:12.5px;background:#4f4f4f;border:1px solid #5f5f5f;"></div>
<span style="left:851.5px;top:312.85px;line-height:14px;font-size:8px;color:#6e6e6e;">0 px</span>
<span style="left:774px;top:332.50px;line-height:14px;font-size:8.2px;color:#d6d6d6;">H</span>
<div style="left:784.8px;top:333px;width:41px;height:12.5px;background:#404040;border:1px solid #5e5e5e;"></div>
<span style="left:788.3px;top:332.55px;line-height:14px;font-size:8.2px;color:#e6e6e6;letter-spacing:-0.311px;">4892 px</span>
<span style="left:837.5px;top:332.50px;line-height:14px;font-size:8.2px;color:#cfcfcf;">Y</span>
<div style="left:848px;top:333px;width:41px;height:12.5px;background:#4f4f4f;border:1px solid #5f5f5f;"></div>
<span style="left:851.5px;top:332.55px;line-height:14px;font-size:8px;color:#6e6e6e;">0 px</span>
<svg style="left:746.3px;top:322.5px;" width="8" height="14" viewBox="0 0 8 14"><rect x="1.5" y="0.9" width="5" height="6.6" rx="2.5" fill="none" stroke="#dcdcdc" stroke-width="1.4"/><rect x="1.5" y="6.5" width="5" height="6.6" rx="2.5" fill="none" stroke="#dcdcdc" stroke-width="1.4"/><path d="M4 4.6V9.4" stroke="#dcdcdc" stroke-width="1.2"/></svg>
<div style="left:785.2px;top:354.8px;width:18.8px;height:18.2px;background:#373737;border-radius:1px;"></div>
<svg style="left:790px;top:358px;" width="10" height="12" viewBox="0 0 10 12"><rect x="0.6" y="0.6" width="8.8" height="10.8" fill="none" stroke="#e6e6e6" stroke-width="1.1"/><circle cx="5" cy="4" r="1.5" fill="#e6e6e6"/><path d="M2.5 11V7.5C2.5 5.8 7.5 5.8 7.5 7.5V11Z" fill="#e6e6e6"/></svg>
<svg style="left:809px;top:359px;" width="13" height="10" viewBox="0 0 13 10"><rect x="0.6" y="0.6" width="11.8" height="8.8" fill="none" stroke="#e6e6e6" stroke-width="1.1"/><circle cx="6.5" cy="3.5" r="1.4" fill="#e6e6e6"/><path d="M4 9V6.8C4 5.2 9 5.2 9 6.8V9Z" fill="#e6e6e6"/></svg>
<span style="left:785.5px;top:381.00px;line-height:14px;font-size:8.2px;color:#d6d6d6;letter-spacing:-0.192px;">Resolution: 72 pixels/inch</span>
<span style="left:760.5px;top:400.30px;line-height:14px;font-size:8.2px;color:#d6d6d6;letter-spacing:-0.378px;">Mode</span>
<div style="left:1005px;top:290px;width:13px;height:123px;background:#494949;"></div>
<svg style="left:1007.5px;top:295px;" width="8" height="5" viewBox="0 0 8 5"><path d="M0.8 4.2L4 1L7.2 4.2" stroke="#8c8c8c" stroke-width="1" fill="none"/></svg>
<svg style="left:1007.5px;top:402px;" width="8" height="5" viewBox="0 0 8 5"><path d="M0.8 0.8L4 4L7.2 0.8" stroke="#8c8c8c" stroke-width="1" fill="none"/></svg>
<div style="left:1006.5px;top:303px;width:9px;height:33px;background:#6b6b6b;"></div>
<div style="left:732.5px;top:431px;width:285.5px;height:3px;background:#3d3d3d;"></div>
<div style="left:732.5px;top:434px;width:285.5px;height:22px;background:#424242;"></div>
<div style="left:732.5px;top:434px;width:37.0px;height:22px;background:#535353;"></div>
<span style="left:739px;top:437.10px;line-height:14px;font-size:8.6px;color:#f0f0f0;font-weight:bold;letter-spacing:-0.705px;">Layers</span>
<span style="left:776px;top:437.10px;line-height:14px;font-size:8.6px;color:#b2b2b2;font-weight:bold;letter-spacing:-0.651px;">Channels</span>
<div style="left:816px;top:434px;width:1px;height:22px;background:#4c4c4c;"></div>
<span style="left:822.5px;top:437.10px;line-height:14px;font-size:8.6px;color:#b2b2b2;font-weight:bold;letter-spacing:-0.584px;">Paths</span>
<div style="left:849.5px;top:434px;width:1px;height:22px;background:#4c4c4c;"></div>
<div style="left:1005px;top:442.5px;width:8px;height:1.3px;background:#b0b0b0;"></div>
<div style="left:1005px;top:445.0px;width:8px;height:1.3px;background:#b0b0b0;"></div>
<div style="left:1005px;top:447.5px;width:8px;height:1.3px;background:#b0b0b0;"></div>
<div style="left:735.5px;top:462.5px;width:67px;height:15.5px;background:#404040;border:1px solid #4c4c4c;border-radius:2px;"></div>
<svg style="left:741px;top:466.5px;" width="8" height="8" viewBox="0 0 8 8"><circle cx="3.2" cy="3.2" r="2.3" fill="none" stroke="#e0e0e0" stroke-width="1.1"/><path d="M5 5L7.4 7.4" stroke="#e0e0e0" stroke-width="1.3"/></svg>
<span style="left:752.5px;top:463.50px;line-height:14px;font-size:8.5px;color:#e6e6e6;letter-spacing:-0.253px;">Kind</span>
<svg style="left:794px;top:468.5px;" width="6" height="5" viewBox="0 0 6 5"><path d="M0.5 0.8L3 3.5L5.5 0.8" stroke="#c8c8c8" stroke-width="1" fill="none"/></svg>
<svg style="left:811.5px;top:466.5px;" width="9" height="8" viewBox="0 0 9 8"><rect x="0.5" y="0.5" width="8" height="7" fill="none" stroke="#e0e0e0" stroke-width="1"/><path d="M1.5 6L3.5 3.5L5 5L6 4L7.5 6Z" fill="#e0e0e0"/></svg>
<svg style="left:830.5px;top:466px;" width="9" height="9" viewBox="0 0 9 9"><circle cx="4.5" cy="4.5" r="3.8" fill="none" stroke="#e0e0e0" stroke-width="1"/><path d="M4.5 0.7A3.8 3.8 0 0 0 4.5 8.3Z" fill="#e0e0e0" transform="rotate(45 4.5 4.5)"/></svg>
<span style="left:850.3px;top:463px;line-height:15px;font-size:11px;color:#e0e0e0;font-family:'Liberation Serif',serif;font-weight:bold;">T</span>
<svg style="left:868.5px;top:466px;" width="9" height="9" viewBox="0 0 9 9"><rect x="1.5" y="1.5" width="6" height="6" fill="none" stroke="#e0e0e0" stroke-width="1"/><rect x="0" y="0" width="2.4" height="2.4" fill="#e0e0e0"/><rect x="6.6" y="0" width="2.4" height="2.4" fill="#e0e0e0"/><rect x="0" y="6.6" width="2.4" height="2.4" fill="#e0e0e0"/><rect x="6.6" y="6.6" width="2.4" height="2.4" fill="#e0e0e0"/></svg>
<svg style="left:887.5px;top:465.5px;" width="9" height="10" viewBox="0 0 9 10"><path d="M3 0.5H6.5L8.5 2.5V9.5H3Z" fill="none" stroke="#e0e0e0" stroke-width="1"/><rect x="0.3" y="5" width="4.4" height="4.6" fill="#e0e0e0"/></svg>
<div style="left:906px;top:463px;width:6.5px;height:14px;border-radius:3.3px;background:#3a3a3a;border:0.5px solid #666;"></div>
<div style="left:906.3px;top:462.5px;width:6px;height:6px;border-radius:50%;background:#e6e6e6;"></div>
<div style="left:732.5px;top:480.5px;width:285.5px;height:1px;background:#464646;"></div>
<div style="left:735.5px;top:484.7px;width:100px;height:15px;background:#4e4e4e;border:1px solid #5c5c5c;border-radius:2px;"></div>
<span style="left:741.5px;top:485.50px;line-height:14px;font-size:8.2px;color:#777;letter-spacing:-0.237px;">Normal</span>
<svg style="left:827px;top:490.5px;" width="6" height="5" viewBox="0 0 6 5"><path d="M0.5 0.8L3 3.5L5.5 0.8" stroke="#6a6a6a" stroke-width="1" fill="none"/></svg>
<span style="left:840.5px;top:485.50px;line-height:14px;font-size:8.2px;color:#7c7c7c;letter-spacing:-0.197px;">Opacity:</span>
<div style="left:872.5px;top:486.5px;width:28.5px;height:12px;background:#494949;border:1px solid #5e5e5e;"></div>
<div style="left:900px;top:486.5px;width:12px;height:12px;background:#494949;border:1px solid #5e5e5e;"></div>
<span style="left:876.5px;top:485.80px;line-height:14px;font-size:8px;color:#787878;letter-spacing:-0.240px;">100%</span>
<svg style="left:903px;top:490.5px;" width="6" height="5" viewBox="0 0 6 5"><path d="M0.5 0.8L3 3.5L5.5 0.8" stroke="#6a6a6a" stroke-width="1" fill="none"/></svg>
<div style="left:732.5px;top:502px;width:285.5px;height:1px;background:#464646;"></div>
<span style="left:737px;top:507.00px;line-height:14px;font-size:8.2px;color:#7c7c7c;letter-spacing:-0.420px;">Lock:</span>
<svg style="left:762.5px;top:509.5px;" width="9" height="9" viewBox="0 0 9 9"><rect x="0.5" y="0.5" width="8" height="8" fill="none" stroke="#9a9a9a" stroke-width="1"/><rect x="1" y="1" width="2.4" height="2.4" fill="#9a9a9a"/><rect x="5.6" y="1" width="2.4" height="2.4" fill="#9a9a9a"/><rect x="3.3" y="3.3" width="2.4" height="2.4" fill="#9a9a9a"/><rect x="1" y="5.6" width="2.4" height="2.4" fill="#9a9a9a"/><rect x="5.6" y="5.6" width="2.4" height="2.4" fill="#9a9a9a"/></svg>
<svg style="left:778px;top:509px;" width="11" height="10" viewBox="0 0 11 10"><path d="M10.5 0.5C8.5 1.5 6 4 4.8 6.2L6 7.3C8 6 10 3 10.5 0.5Z" fill="#9a9a9a"/><path d="M4.2 6.8C2.8 6.8 2.4 8.2 1 9.5C3 9.8 5.4 9.2 5.4 7.8Z" fill="#9a9a9a"/></svg>
<svg style="left:796px;top:509px;" width="10" height="10" viewBox="0 0 10 10"><g transform="scale(0.714)"><path d="M7 0.5L9.3 3H7.7V6.3H11V4.7L13.5 7L11 9.3V7.7H7.7V11H9.3L7 13.5L4.7 11H6.3V7.7H3V9.3L0.5 7L3 4.7V6.3H6.3V3H4.7Z" fill="#9a9a9a"/></g></svg>
<svg style="left:813px;top:508.5px;" width="11" height="11" viewBox="0 0 11 11"><path d="M2.5 0.5V8.5H10.5M0.5 2.5H8.5V10.5" fill="none" stroke="#9a9a9a" stroke-width="1"/></svg>
<svg style="left:831.5px;top:508.5px;" width="9" height="10" viewBox="0 0 9 10"><rect x="0.8" y="4.2" width="7.4" height="5.3" fill="#9a9a9a"/><path d="M2.4 4.4V3A2.1 2.1 0 0 1 6.6 3V4.4" fill="none" stroke="#9a9a9a" stroke-width="1.1"/></svg>
<span style="left:858px;top:507.00px;line-height:14px;font-size:8.2px;color:#7c7c7c;letter-spacing:-0.450px;">Fill:</span>
<div style="left:872.5px;top:508px;width:28.5px;height:12px;background:#494949;border:1px solid #5e5e5e;"></div>
<div style="left:900px;top:508px;width:12px;height:12px;background:#494949;border:1px solid #5e5e5e;"></div>
<span style="left:876.5px;top:507.30px;line-height:14px;font-size:8px;color:#787878;letter-spacing:-0.240px;">100%</span>
<svg style="left:903px;top:512px;" width="6" height="5" viewBox="0 0 6 5"><path d="M0.5 0.8L3 3.5L5.5 0.8" stroke="#6a6a6a" stroke-width="1" fill="none"/></svg>
<div style="left:732.5px;top:526px;width:22.5px;height:19px;background:#c2474a;"></div>
<div style="left:755px;top:544.5px;width:250px;height:1px;background:#464646;"></div>
<svg style="left:738.5px;top:532.0px;" width="11" height="7" viewBox="0 0 11 7"><path d="M0.3 3.5C2.5 -0.6 8.5 -0.6 10.7 3.5C8.5 7.6 2.5 7.6 0.3 3.5Z" fill="#f2f2f2"/><circle cx="5.5" cy="3.5" r="1.9" fill="#c2474a"/></svg>
<svg style="left:759px;top:532.0px;" width="5" height="8" viewBox="0 0 5 8"><path d="M1 0.8L4 4L1 7.2" stroke="#d0d0d0" stroke-width="1" fill="none"/></svg>
<svg style="left:768px;top:531.0px;" width="12" height="9" viewBox="0 0 12 9"><path d="M0.5 0.5H4.5L5.5 1.8H11.5V8.5H0.5Z" fill="#e4e4e4"/><path d="M0.5 2.3H11.5" stroke="#535353" stroke-width="0.5"/></svg>
<span style="left:788.2px;top:528.80px;line-height:14px;font-size:8.4px;color:#e6e6e6;letter-spacing:-0.026px;">Text</span>
<div style="left:732.5px;top:545px;width:22.5px;height:19.5px;background:#b3620f;"></div>
<div style="left:755px;top:564.0px;width:250px;height:1px;background:#464646;"></div>
<svg style="left:738.5px;top:551.25px;" width="11" height="7" viewBox="0 0 11 7"><path d="M0.3 3.5C2.5 -0.6 8.5 -0.6 10.7 3.5C8.5 7.6 2.5 7.6 0.3 3.5Z" fill="#f2f2f2"/><circle cx="5.5" cy="3.5" r="1.9" fill="#b3620f"/></svg>
<svg style="left:759px;top:551.25px;" width="5" height="8" viewBox="0 0 5 8"><path d="M1 0.8L4 4L1 7.2" stroke="#d0d0d0" stroke-width="1" fill="none"/></svg>
<svg style="left:768px;top:550.25px;" width="12" height="9" viewBox="0 0 12 9"><path d="M0.5 0.5H4.5L5.5 1.8H11.5V8.5H0.5Z" fill="#e4e4e4"/><path d="M0.5 2.3H11.5" stroke="#535353" stroke-width="0.5"/></svg>
<span style="left:788.2px;top:548.05px;line-height:14px;font-size:8.4px;color:#e6e6e6;letter-spacing:-0.119px;">Orange</span>
<div style="left:732.5px;top:564.5px;width:22.5px;height:19.5px;background:#b7940e;"></div>
<div style="left:755px;top:583.5px;width:250px;height:1px;background:#464646;"></div>
<svg style="left:738.5px;top:570.75px;" width="11" height="7" viewBox="0 0 11 7"><path d="M0.3 3.5C2.5 -0.6 8.5 -0.6 10.7 3.5C8.5 7.6 2.5 7.6 0.3 3.5Z" fill="#f2f2f2"/><circle cx="5.5" cy="3.5" r="1.9" fill="#b7940e"/></svg>
<svg style="left:759px;top:570.75px;" width="5" height="8" viewBox="0 0 5 8"><path d="M1 0.8L4 4L1 7.2" stroke="#d0d0d0" stroke-width="1" fill="none"/></svg>
<svg style="left:768px;top:569.75px;" width="12" height="9" viewBox="0 0 12 9"><path d="M0.5 0.5H4.5L5.5 1.8H11.5V8.5H0.5Z" fill="#e4e4e4"/><path d="M0.5 2.3H11.5" stroke="#535353" stroke-width="0.5"/></svg>
<span style="left:788.2px;top:567.55px;line-height:14px;font-size:8.4px;color:#e6e6e6;letter-spacing:-0.275px;">Unused</span>
<div style="left:732.5px;top:584px;width:22.5px;height:10px;background:#535353;"></div>
<div style="left:759.5px;top:588.5px;width:19.5px;height:6px;background:linear-gradient(to right,#9fb0cc,#c9d0de 55%,#e8a020 75%,#d8dce6);border:1px solid #e0e0e0;border-bottom:none;"></div>
<div style="left:1005px;top:526px;width:13px;height:68px;background:#494949;"></div>
<svg style="left:1007.5px;top:531.5px;" width="8" height="5" viewBox="0 0 8 5"><path d="M0.8 4.2L4 1L7.2 4.2" stroke="#8c8c8c" stroke-width="1" fill="none"/></svg>
<svg style="left:1007.5px;top:583.5px;" width="8" height="5" viewBox="0 0 8 5"><path d="M0.8 0.8L4 4L7.2 0.8" stroke="#8c8c8c" stroke-width="1" fill="none"/></svg>
<div style="left:1006.5px;top:539px;width:9px;height:30px;background:#6b6b6b;"></div>
<div style="left:732.5px;top:593.5px;width:285.5px;height:1px;background:#3d3d3d;"></div>
<svg style="left:858.8px;top:600.3px;" width="12" height="7" viewBox="0 0 12 7"><rect x="0.6" y="0.8" width="5" height="5.4" rx="2.5" fill="none" stroke="#8c8c8c" stroke-width="1.1"/><rect x="6.4" y="0.8" width="5" height="5.4" rx="2.5" fill="none" stroke="#8c8c8c" stroke-width="1.1"/><path d="M3.4 3.5H8.6" stroke="#8c8c8c" stroke-width="1.1"/></svg>
<span style="left:881.8px;top:596.4px;line-height:14px;font-size:11px;color:#8c8c8c;font-style:italic;-webkit-text-stroke:0;">fx</span>
<svg style="left:901px;top:599.5px;" width="11" height="8" viewBox="0 0 11 8"><rect x="0" y="0" width="11" height="8" fill="#8c8c8c"/><circle cx="5.5" cy="4" r="2.5" fill="#535353"/></svg>
<svg style="left:923px;top:599px;" width="11" height="11" viewBox="0 0 11 11"><circle cx="4.8" cy="4.8" r="4" fill="none" stroke="#dcdcdc" stroke-width="1"/><path d="M4.8 0.8A4 4 0 0 0 4.8 8.8Z" fill="#dcdcdc" transform="rotate(45 4.8 4.8)"/><path d="M8 9.5H11L9.5 11Z" fill="#dcdcdc"/></svg>
<svg style="left:943.5px;top:599.5px;" width="11" height="8" viewBox="0 0 11 8"><path d="M0 0H4L5 1.2H11V8H0Z" fill="#dcdcdc"/></svg>
<svg style="left:965.5px;top:599px;" width="10" height="10" viewBox="0 0 10 10"><rect x="0.6" y="0.6" width="8.8" height="8.8" fill="none" stroke="#dcdcdc" stroke-width="1.1"/><path d="M5 2.8V7.2M2.8 5H7.2" stroke="#dcdcdc" stroke-width="1.1"/></svg>
<svg style="left:986.5px;top:598.5px;" width="9" height="11" viewBox="0 0 9 11"><path d="M0.3 2.2H8.7M3 2V0.7H6V2" fill="none" stroke="#8c8c8c" stroke-width="1"/><path d="M1.2 3V10.3H7.8V3Z" fill="none" stroke="#8c8c8c" stroke-width="1"/><path d="M3.3 4V9M5.7 4V9" stroke="#8c8c8c" stroke-width="1"/></svg>
</div></body></html>
